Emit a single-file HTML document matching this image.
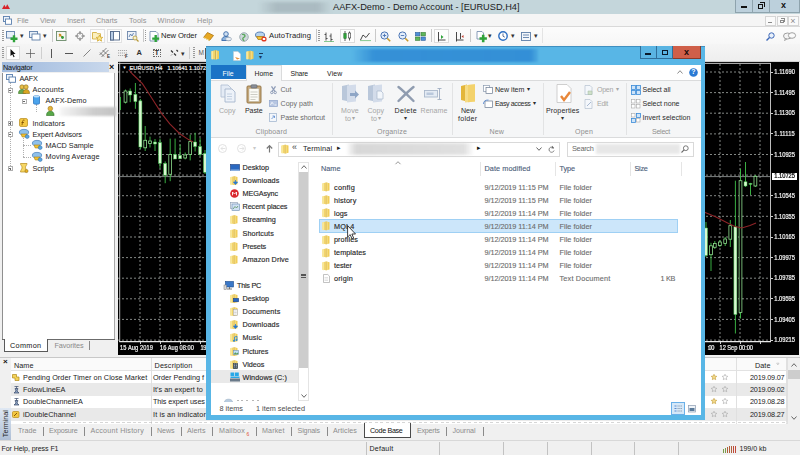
<!DOCTYPE html>
<html><head><meta charset="utf-8"><title>AAFX-Demo - Demo Account - [EURUSD,H4]</title>
<style>
html,body{margin:0;padding:0;}
body{width:800px;height:455px;overflow:hidden;position:relative;background:#f0f0f0;font-family:"Liberation Sans",sans-serif;}
#root{position:absolute;left:0;top:0;width:800px;height:455px;overflow:hidden;}
#root div,#root span.t,#root svg{position:absolute;}
#root div{box-sizing:border-box;}
span.t{white-space:pre;display:block;}
svg{overflow:visible;}
</style></head><body><div id="root">
<div style="left:0px;top:0px;width:800px;height:14px;background:#c4d6db;"></div>
<svg style="left:2.3px;top:4.3px;" width="8" height="5" viewBox="0 0 8 5"><path d="M0 5L2.300 0.800L3.800 3.200L5.200 0.300L8 5Z" fill="#d8232a"/></svg>
<span class="t" style="left:333px;top:2.53px;font-size:9.22px;line-height:9.22px;color:#1c1c1c;">AAFX-Demo - Demo Account - [EURUSD,H4]</span>
<div style="left:258px;top:2px;width:74px;height:11px;background:linear-gradient(90deg,rgba(150,165,172,0),rgba(150,165,172,.55) 25%,rgba(150,165,172,.55) 80%,rgba(150,165,172,0));filter:blur(1.5px);"></div>
<div style="left:735px;top:0px;width:18px;height:12.5px;background:#bcd0dc;border:1px solid #8ea3ad;border-top:none;"></div>
<div style="left:752px;top:0px;width:18px;height:12.5px;background:#bcd0dc;border:1px solid #8ea3ad;border-top:none;"></div>
<div style="left:769px;top:0px;width:31px;height:12.5px;background:#bcd0dc;border:1px solid #8ea3ad;border-top:none;"></div>
<div style="left:741px;top:6px;width:6px;height:2px;background:#111;"></div>
<div style="left:757.5px;top:3.5px;width:5px;height:5px;border:1.2px solid #111;"></div>
<div style="left:759.5px;top:2px;width:5px;height:5px;border:1.2px solid #111;border-left:none;border-bottom:none;"></div>
<span class="t" style="left:781px;top:0.85px;font-size:9.00px;line-height:9.00px;color:#111;letter-spacing:0.495px;font-weight:bold;">x</span>
<div style="left:0px;top:14px;width:800px;height:12.5px;background:#f5f5f5;"></div>
<div style="left:0px;top:26.3px;width:800px;height:0.8px;background:#d9d9d9;"></div>
<svg style="left:3px;top:15.5px;" width="9" height="9" viewBox="0 0 9 9"><rect x="0.5" y="0.5" width="6" height="5" fill="#eef4fb" stroke="#5a7fae" stroke-width="0.9"/><rect x="2.5" y="3" width="6" height="5.3" fill="#fff" stroke="#5a7fae" stroke-width="0.9"/></svg>
<span class="t" style="left:17px;top:17.34px;font-size:7.38px;line-height:7.38px;color:#939393;letter-spacing:-0.099px;">File</span>
<span class="t" style="left:40px;top:17.34px;font-size:7.38px;line-height:7.38px;color:#939393;letter-spacing:-0.092px;">View</span>
<span class="t" style="left:67px;top:17.34px;font-size:7.38px;line-height:7.38px;color:#939393;letter-spacing:-0.077px;">Insert</span>
<span class="t" style="left:96px;top:17.34px;font-size:7.38px;line-height:7.38px;color:#939393;letter-spacing:-0.041px;">Charts</span>
<span class="t" style="left:129px;top:17.34px;font-size:7.38px;line-height:7.38px;color:#939393;letter-spacing:0.053px;">Tools</span>
<span class="t" style="left:157.5px;top:17.34px;font-size:7.38px;line-height:7.38px;color:#939393;letter-spacing:0.207px;">Window</span>
<span class="t" style="left:197px;top:17.34px;font-size:7.38px;line-height:7.38px;color:#939393;letter-spacing:0.079px;">Help</span>
<div style="left:765px;top:15.5px;width:11px;height:10px;background:#fafafa;border:1px solid #d5d5d5;"></div>
<div style="left:776.5px;top:15.5px;width:11px;height:10px;background:#fafafa;border:1px solid #d5d5d5;"></div>
<div style="left:788px;top:15.5px;width:11px;height:10px;background:#fafafa;border:1px solid #d5d5d5;"></div>
<div style="left:768px;top:22px;width:4px;height:1px;background:#8a8a8a;"></div>
<div style="left:779.8px;top:19.5px;width:4px;height:3.5px;border:0.8px solid #8a8a8a;"></div>
<div style="left:781.2px;top:18px;width:4px;height:3.5px;border:0.8px solid #8a8a8a;border-left:none;border-bottom:none;"></div>
<span class="t" style="left:790.3px;top:16.65px;font-size:9.00px;line-height:9.00px;color:#8a8a8a;letter-spacing:0.943px;">×</span>
<div style="left:0px;top:27px;width:800px;height:17px;background:linear-gradient(#fcfcfc,#f7f7f7);"></div>
<div style="left:0px;top:43.6px;width:800px;height:0.8px;background:#dedede;"></div>
<div style="left:0px;top:44.4px;width:800px;height:16.6px;background:linear-gradient(#f5f5f5,#eeeeee);"></div>
<div style="left:0px;top:60.6px;width:800px;height:0.8px;background:#d0d0d0;"></div>
<div style="left:2px;top:29.5px;width:1.6px;height:1px;background:#9a9a9a;"></div>
<div style="left:2px;top:31.5px;width:1.6px;height:1px;background:#9a9a9a;"></div>
<div style="left:2px;top:33.5px;width:1.6px;height:1px;background:#9a9a9a;"></div>
<div style="left:2px;top:35.5px;width:1.6px;height:1px;background:#9a9a9a;"></div>
<div style="left:2px;top:37.5px;width:1.6px;height:1px;background:#9a9a9a;"></div>
<div style="left:2px;top:39.5px;width:1.6px;height:1px;background:#9a9a9a;"></div>
<svg style="left:6px;top:30.6px;" width="12" height="11" viewBox="0 0 12 11"><rect x="0.5" y="0.5" width="8" height="6.5" fill="#e9f0f8" stroke="#5d7ea8" stroke-width="0.9"/><path d="M4.500 6.600h2.300v-2.300h2.400v2.300h2.300v2.400h-2.300v2.300h-2.400v-2.300h-2.300z" fill="#2fa33a"/></svg>
<span class="t" style="left:19.5px;top:32.15px;font-size:7.00px;line-height:7.00px;color:#333;letter-spacing:-1.250px;">▾</span>
<svg style="left:29px;top:31.1px;" width="12" height="10" viewBox="0 0 12 10"><rect x="0.5" y="0.5" width="8" height="6" fill="#e9f0f8" stroke="#5d7ea8" stroke-width="0.9"/><rect x="3" y="3" width="8" height="6" fill="#fff" stroke="#5d7ea8" stroke-width="0.9"/></svg>
<span class="t" style="left:42.5px;top:32.15px;font-size:7.00px;line-height:7.00px;color:#333;letter-spacing:-1.250px;">▾</span>
<div style="left:51.5px;top:29px;width:0.8px;height:13px;background:#c9c9c9;"></div>
<svg style="left:56px;top:31.1px;" width="11" height="10" viewBox="0 0 11 10"><rect x="0.5" y="0.5" width="9.5" height="9" fill="#f6f6f0" stroke="#6a8a6a" stroke-width="0.9"/><path d="M3 3l4 4M3 5.5l2-2.5" stroke="#c88a1a" stroke-width="1.2" fill="none"/><circle cx="6.5" cy="6.5" r="1.4" fill="#2e9a3a"/></svg>
<svg style="left:75px;top:31.1px;" width="10" height="10" viewBox="0 0 10 10"><circle cx="5" cy="5" r="3.2" fill="none" stroke="#666" stroke-width="0.7"/><path d="M5 0v3.600M5 6.400V10M0 5h3.600M6.400 5H10" stroke="#555" stroke-width="0.7"/></svg>
<div style="left:89.5px;top:28.5px;width:15px;height:14.5px;background:#fdfdfd;border:1px solid #e2e2e2;"></div>
<svg style="left:91.5px;top:31.1px;" width="11" height="10" viewBox="0 0 11 10"><path d="M0.5 1.5h4l1 1.2h3v5.3h-8z" fill="#fbf0c0" stroke="#d0a830" stroke-width="0.8"/><path d="M7.5 4l1 2.2 2.3.2-1.8 1.5.6 2.3-2.1-1.3-2.1 1.3.6-2.3-1.8-1.5 2.3-.2z" fill="#fbe890" stroke="#d0a020" stroke-width="0.7"/></svg>
<div style="left:107px;top:28.5px;width:15px;height:14.5px;background:#fdfdfd;border:1px solid #e2e2e2;"></div>
<svg style="left:109.5px;top:31.1px;" width="10" height="10" viewBox="0 0 10 10"><rect x="0.5" y="0.5" width="9" height="8.5" fill="#fff" stroke="#52688a" stroke-width="0.9"/><rect x="0.5" y="0.5" width="3" height="8.5" fill="#b9cde6" stroke="#52688a" stroke-width="0.9"/></svg>
<svg style="left:126.5px;top:30.6px;" width="12" height="11" viewBox="0 0 12 11"><rect x="0.5" y="0.5" width="8.5" height="8" fill="#eef3fa" stroke="#6d86aa" stroke-width="0.9"/><path d="M2 6l1.5-3 1.5 2 1.5-3" stroke="#4a6ea0" stroke-width="0.8" fill="none"/><circle cx="8" cy="7" r="2" fill="#f4f0d0" stroke="#b89a3a" stroke-width="0.8"/><path d="M9.5 8.5l2 2" stroke="#b89a3a" stroke-width="1.2"/></svg>
<div style="left:142.5px;top:29px;width:0.8px;height:13px;background:#c9c9c9;"></div>
<div style="left:144.5px;top:29.5px;width:1.6px;height:1px;background:#9a9a9a;"></div>
<div style="left:144.5px;top:31.5px;width:1.6px;height:1px;background:#9a9a9a;"></div>
<div style="left:144.5px;top:33.5px;width:1.6px;height:1px;background:#9a9a9a;"></div>
<div style="left:144.5px;top:35.5px;width:1.6px;height:1px;background:#9a9a9a;"></div>
<div style="left:144.5px;top:37.5px;width:1.6px;height:1px;background:#9a9a9a;"></div>
<div style="left:144.5px;top:39.5px;width:1.6px;height:1px;background:#9a9a9a;"></div>
<svg style="left:148.5px;top:30.6px;" width="12" height="11" viewBox="0 0 12 11"><path d="M1 0.5h6l2 2v7.5h-8z" fill="#fff" stroke="#6d86aa" stroke-width="0.8"/><path d="M3.200 6.400h2.300v-2.300h2.400v2.300h2.300v2.400h-2.300v2.300h-2.400v-2.300h-2.300z" fill="#2fa33a"/></svg>
<span class="t" style="left:161px;top:31.61px;font-size:7.62px;line-height:7.62px;color:#222;letter-spacing:-0.093px;">New Order</span>
<svg style="left:203px;top:31.6px;" width="11" height="9" viewBox="0 0 11 9"><path d="M0.5 5.5l4-5 6 3-4 5z" fill="#e8a822" stroke="#a8720f" stroke-width="0.8"/><path d="M0.5 5.5l6 3" stroke="#fff2b0" stroke-width="0.8"/></svg>
<svg style="left:221px;top:31.1px;" width="11" height="10" viewBox="0 0 11 10"><circle cx="5" cy="3" r="2.3" fill="#cfe0f2" stroke="#3a6aa8" stroke-width="0.9"/><path d="M0.8 9.5c0-3 1.8-4 4.2-4s4.2 1 4.2 4z" fill="#8db4e0" stroke="#3a6aa8" stroke-width="0.9"/><ellipse cx="7.5" cy="8" rx="3" ry="1.8" fill="#e8eef5" stroke="#8899aa" stroke-width="0.6"/></svg>
<svg style="left:239px;top:31.6px;" width="10" height="10" viewBox="0 0 10 10"><circle cx="5" cy="5" r="4.3" fill="#cfd8dc" stroke="#90a0a8" stroke-width="0.8"/><path d="M3 2.5c1.5-.5 3 .3 3 1.6s-2 1-2.2 2.4 1.4 1.8 1 2.6" fill="none" stroke="#58a85a" stroke-width="1.3"/></svg>
<svg style="left:255px;top:31.1px;" width="12" height="11" viewBox="0 0 12 11"><ellipse cx="5" cy="4" rx="4.5" ry="3" fill="#b7d3ee" stroke="#3a6aa8" stroke-width="0.8"/><path d="M1.5 5.5l1.5 3h4l1.5-3z" fill="#f1c232" stroke="#a8720f" stroke-width="0.7"/><circle cx="9" cy="8" r="2.6" fill="#e03a22"/><rect x="7.8" y="7" width="2.4" height="2" fill="#fff"/></svg>
<span class="t" style="left:269px;top:31.61px;font-size:7.62px;line-height:7.62px;color:#222;letter-spacing:0.070px;">AutoTrading</span>
<div style="left:315.5px;top:29px;width:0.8px;height:13px;background:#c9c9c9;"></div>
<div style="left:318px;top:29.5px;width:1.6px;height:1px;background:#9a9a9a;"></div>
<div style="left:318px;top:31.5px;width:1.6px;height:1px;background:#9a9a9a;"></div>
<div style="left:318px;top:33.5px;width:1.6px;height:1px;background:#9a9a9a;"></div>
<div style="left:318px;top:35.5px;width:1.6px;height:1px;background:#9a9a9a;"></div>
<div style="left:318px;top:37.5px;width:1.6px;height:1px;background:#9a9a9a;"></div>
<div style="left:318px;top:39.5px;width:1.6px;height:1px;background:#9a9a9a;"></div>
<svg style="left:324px;top:31.6px;" width="10" height="10" viewBox="0 0 10 10"><path d="M2 0.5v8M0.5 2.5h1.5M2 6.5h1.6M7 1.5v8M5.5 4h1.5M7 7.5h1.6" stroke="#444" stroke-width="0.9" fill="none"/><path d="M0 9.5h10" stroke="#3aa84a" stroke-width="0.6"/></svg>
<div style="left:339.5px;top:28.5px;width:15px;height:14.5px;background:#fdfdfd;border:1px solid #dcdcdc;"></div>
<svg style="left:342.5px;top:31.1px;" width="9" height="11" viewBox="0 0 9 11"><path d="M2 0v10M6.5 0.5v9" stroke="#333" stroke-width="0.8"/><rect x="0.8" y="2.5" width="2.4" height="5" fill="#2fa33a" stroke="#1b6a25" stroke-width="0.5"/><rect x="5.3" y="2" width="2.4" height="5" fill="#fff" stroke="#333" stroke-width="0.6"/></svg>
<svg style="left:359.5px;top:32.1px;" width="11" height="9" viewBox="0 0 11 9"><path d="M0.5 8l2.5-5 3 2.5 3.5-4.5" stroke="#333" stroke-width="0.9" fill="none"/><path d="M0 8.6h11" stroke="#3aa84a" stroke-width="0.6"/></svg>
<div style="left:374.5px;top:29px;width:0.8px;height:13px;background:#c9c9c9;"></div>
<svg style="left:379.5px;top:31.1px;" width="11" height="11" viewBox="0 0 11 11"><circle cx="4.5" cy="4.5" r="3.6" fill="#e4eefb" stroke="#4a74b4" stroke-width="1"/><path d="M2.8 4.5h3.4M4.5 2.8v3.4" stroke="#4a74b4" stroke-width="0.9"/><path d="M7.2 7.2l3 3" stroke="#c89a2a" stroke-width="1.6"/></svg>
<svg style="left:397.5px;top:31.1px;" width="11" height="11" viewBox="0 0 11 11"><circle cx="4.5" cy="4.5" r="3.6" fill="#e4eefb" stroke="#4a74b4" stroke-width="1"/><path d="M2.8 4.5h3.4" stroke="#4a74b4" stroke-width="0.9"/><path d="M7.2 7.2l3 3" stroke="#c89a2a" stroke-width="1.6"/></svg>
<svg style="left:415px;top:31.6px;" width="11" height="9" viewBox="0 0 11 9"><rect x="0.5" y="0.5" width="4.3" height="3.3" fill="#4d8fd6" stroke="#2a5c9a" stroke-width="0.6"/><rect x="6" y="0.5" width="4.3" height="3.3" fill="#5fb65a" stroke="#2f7a2f" stroke-width="0.6"/><rect x="0.5" y="5" width="4.3" height="3.3" fill="#5fb65a" stroke="#2f7a2f" stroke-width="0.6"/><rect x="6" y="5" width="4.3" height="3.3" fill="#4d8fd6" stroke="#2a5c9a" stroke-width="0.6"/></svg>
<div style="left:430.5px;top:29px;width:0.8px;height:13px;background:#c9c9c9;"></div>
<div style="left:433.5px;top:28.5px;width:15px;height:14.5px;background:#fdfdfd;border:1px solid #dcdcdc;"></div>
<svg style="left:437px;top:31.6px;" width="9" height="10" viewBox="0 0 9 10"><path d="M1.5 0v9.5M1.5 8h7" stroke="#333" stroke-width="0.9" fill="none"/><path d="M4 3v4l2.5-2z" fill="#2fa33a"/></svg>
<svg style="left:455px;top:31.6px;" width="9" height="10" viewBox="0 0 9 10"><path d="M1.5 0v9.5M1.5 8h7M5.5 1v6" stroke="#333" stroke-width="0.9" fill="none"/><path d="M8.5 3v3l-2-1.5z" fill="#c0392b"/></svg>
<div style="left:469.5px;top:29px;width:0.8px;height:13px;background:#c9c9c9;"></div>
<svg style="left:476px;top:31.1px;" width="11" height="11" viewBox="0 0 11 11"><path d="M1 0.5h5l1.5 1.5v6h-6.5z" fill="#fff" stroke="#6d86aa" stroke-width="0.8"/><path d="M3.5 6.2h2.4v-2.4h2.6v2.4h2.4v2.6h-2.4v2.4h-2.6v-2.4h-2.4z" fill="#2fa33a"/></svg>
<span class="t" style="left:488px;top:32.15px;font-size:7.00px;line-height:7.00px;color:#333;letter-spacing:-1.250px;">▾</span>
<svg style="left:498px;top:31.1px;" width="10" height="10" viewBox="0 0 10 10"><circle cx="5" cy="5" r="4.2" fill="#fff" stroke="#2e6fc2" stroke-width="1.4"/><path d="M5 2.5v2.7l1.8 1" stroke="#2e4a7a" stroke-width="0.8" fill="none"/></svg>
<span class="t" style="left:511px;top:32.15px;font-size:7.00px;line-height:7.00px;color:#333;letter-spacing:-1.250px;">▾</span>
<svg style="left:521px;top:31.6px;" width="10" height="9" viewBox="0 0 10 9"><rect x="0.5" y="0.5" width="9" height="8" fill="#f4f7fb" stroke="#5d7ea8" stroke-width="0.9"/><path d="M2 3h6M2 5.5h6" stroke="#5d7ea8" stroke-width="0.9"/></svg>
<span class="t" style="left:534px;top:32.15px;font-size:7.00px;line-height:7.00px;color:#333;letter-spacing:-1.250px;">▾</span>
<div style="left:542px;top:28px;width:0.8px;height:15px;background:#e4e4e4;"></div>
<svg style="left:765.5px;top:31.6px;" width="9" height="9" viewBox="0 0 9 9"><circle cx="5.5" cy="3.5" r="2.7" fill="#e9f1fb" stroke="#3d68b8" stroke-width="1"/><path d="M3.5 5.5l-3 3" stroke="#3d68b8" stroke-width="1.4"/></svg>
<svg style="left:782.5px;top:32.1px;" width="13" height="9" viewBox="0 0 13 9"><ellipse cx="4.5" cy="4" rx="4" ry="3" fill="#f4f4f4" stroke="#8a8a8a" stroke-width="0.8"/><ellipse cx="9" cy="3.5" rx="3.6" ry="2.8" fill="#fafafa" stroke="#8a8a8a" stroke-width="0.8"/><path d="M2.5 6.5l-1 2 2.4-1.3" fill="#f4f4f4" stroke="#8a8a8a" stroke-width="0.7"/></svg>
<div style="left:2px;top:46.5px;width:1.6px;height:1px;background:#9a9a9a;"></div>
<div style="left:2px;top:48.5px;width:1.6px;height:1px;background:#9a9a9a;"></div>
<div style="left:2px;top:50.5px;width:1.6px;height:1px;background:#9a9a9a;"></div>
<div style="left:2px;top:52.5px;width:1.6px;height:1px;background:#9a9a9a;"></div>
<div style="left:2px;top:54.5px;width:1.6px;height:1px;background:#9a9a9a;"></div>
<div style="left:2px;top:56.5px;width:1.6px;height:1px;background:#9a9a9a;"></div>
<div style="left:5.5px;top:45.5px;width:14.5px;height:14.5px;background:#fdfdfd;border:1px solid #dcdcdc;"></div>
<svg style="left:10px;top:48.5px;" width="6" height="9" viewBox="0 0 6 9"><path d="M0.5 0v7l1.8-1.6 1.3 2.8 1-.5-1.3-2.7h2.3z" fill="#111"/></svg>
<svg style="left:26px;top:48.5px;" width="9" height="9" viewBox="0 0 9 9"><path d="M4.5 0v9M0 4.5h9" stroke="#555" stroke-width="0.7"/></svg>
<div style="left:40.5px;top:46.5px;width:0.8px;height:12px;background:#cfcfcf;"></div>
<div style="left:51px;top:48.5px;width:0.9px;height:9px;background:#555;"></div>
<div style="left:65px;top:52.6px;width:8px;height:0.9px;background:#555;"></div>
<svg style="left:83px;top:48.5px;" width="8" height="8" viewBox="0 0 8 8"><path d="M0.5 7.5l7-7" stroke="#777" stroke-width="0.9"/></svg>
<svg style="left:99px;top:47.5px;" width="11" height="11" viewBox="0 0 11 11"><path d="M0.5 7l7-7M2.5 9l7-7M1 4.5l4 4M3.5 2l4 4" stroke="#555" stroke-width="0.7"/></svg>
<span class="t" style="left:107px;top:55.02px;font-size:4.50px;line-height:4.50px;color:#333;font-weight:bold;">E</span>
<svg style="left:117.5px;top:48.5px;" width="10" height="9" viewBox="0 0 10 9"><path d="M0 1.5h9M0 4h9M0 6.5h9" stroke="#888" stroke-width="0.7" stroke-dasharray="1.2 0.8"/></svg>
<span class="t" style="left:125px;top:55.02px;font-size:4.50px;line-height:4.50px;color:#333;letter-spacing:0.251px;font-weight:bold;">F</span>
<span class="t" style="left:136.5px;top:49.27px;font-size:7.50px;line-height:7.50px;color:#333;letter-spacing:-0.416px;font-weight:bold;">A</span>
<div style="left:152.5px;top:48.5px;width:8px;height:8.5px;border:0.8px dotted #666;"></div>
<span class="t" style="left:154.4px;top:48.88px;font-size:7.50px;line-height:7.50px;color:#333;letter-spacing:-0.381px;font-weight:bold;">T</span>
<svg style="left:169.5px;top:49px;" width="9" height="8" viewBox="0 0 9 8"><path d="M1 1.5l2 2M4 4.5l2 2M6.5 1l1.5 1.5" stroke="#333" stroke-width="1.2"/><path d="M1 6.5l1.2-1.2" stroke="#888" stroke-width="1"/></svg>
<span class="t" style="left:181px;top:49.65px;font-size:7.00px;line-height:7.00px;color:#333;letter-spacing:-1.250px;">▾</span>
<div style="left:189px;top:46.5px;width:0.8px;height:12px;background:#cfcfcf;"></div>
<div style="left:193px;top:46.5px;width:1.6px;height:1px;background:#9a9a9a;"></div>
<div style="left:193px;top:48.5px;width:1.6px;height:1px;background:#9a9a9a;"></div>
<div style="left:193px;top:50.5px;width:1.6px;height:1px;background:#9a9a9a;"></div>
<div style="left:193px;top:52.5px;width:1.6px;height:1px;background:#9a9a9a;"></div>
<div style="left:193px;top:54.5px;width:1.6px;height:1px;background:#9a9a9a;"></div>
<div style="left:193px;top:56.5px;width:1.6px;height:1px;background:#9a9a9a;"></div>
<span class="t" style="left:198.6px;top:49.72px;font-size:6.50px;line-height:6.50px;color:#555;letter-spacing:0.186px;">M</span>
<div style="left:204.8px;top:47.5px;width:0.8px;height:11px;background:#555;"></div>
<div style="left:0px;top:61px;width:117.5px;height:294px;background:#f0f0f0;"></div>
<div style="left:2px;top:62px;width:106.5px;height:10px;background:linear-gradient(90deg,#9fb9dc,#b7cbe6 60%,#c9d8ec);"></div>
<span class="t" style="left:3px;top:63.59px;font-size:7.29px;line-height:7.29px;color:#111;letter-spacing:-0.189px;">Navigator</span>
<span class="t" style="left:109px;top:62.55px;font-size:9.00px;line-height:9.00px;color:#111;letter-spacing:-0.257px;font-weight:bold;">×</span>
<div style="left:2px;top:72.5px;width:113px;height:266.5px;background:#fff;border-left:1px solid #8f8f8f;border-right:1px solid #a8a8a8;"></div>
<div style="left:10px;top:82px;width:0.7px;height:86px;border-left:0.7px dotted #b0b0b0;"></div>
<div style="left:23px;top:138px;width:0.7px;height:19px;border-left:0.7px dotted #b0b0b0;"></div>
<div style="left:23px;top:145px;width:8px;height:0.7px;border-top:0.7px dotted #b0b0b0;"></div>
<div style="left:23px;top:156.5px;width:8px;height:0.7px;border-top:0.7px dotted #b0b0b0;"></div>
<div style="left:36px;top:104px;width:0.7px;height:8px;border-left:0.7px dotted #b0b0b0;"></div>
<svg style="left:5.5px;top:73.5px;" width="10" height="9" viewBox="0 0 10 9"><rect x="0.5" y="0.5" width="6" height="5" fill="#eef4fb" stroke="#5a7fae" stroke-width="0.9"/><rect x="3" y="3" width="6.5" height="5.3" fill="#fff" stroke="#5a7fae" stroke-width="0.9"/></svg>
<span class="t" style="left:19.5px;top:74.79px;font-size:7.29px;line-height:7.29px;color:#222;letter-spacing:-0.261px;">AAFX</span>
<div style="left:7.5px;top:87.5px;width:5px;height:5px;background:#fff;border:0.7px solid #b0b0b0;"></div>
<div style="left:8.7px;top:89.65px;width:2.6px;height:0.7px;background:#666;"></div>
<svg style="left:17.5px;top:84px;" width="12" height="10" viewBox="0 0 12 10"><circle cx="4" cy="3" r="2.2" fill="#e8c04a" stroke="#8a6a1a" stroke-width="0.6"/><circle cx="8" cy="3" r="2.2" fill="#e8c04a" stroke="#8a6a1a" stroke-width="0.6"/><path d="M0.5 9.5c0-3 1.5-4 3.5-4s3.500 1 3.500 4z" fill="#6aa84f" stroke="#38761d" stroke-width="0.6"/><path d="M5 9.500c0-3 1.300-4 3.300-4s3.200 1 3.200 4z" fill="#d9a520" stroke="#8a6a1a" stroke-width="0.6"/></svg>
<span class="t" style="left:32.5px;top:85.99px;font-size:7.29px;line-height:7.29px;color:#222;letter-spacing:0.189px;">Accounts</span>
<div style="left:21.5px;top:98.5px;width:5px;height:5px;background:#fff;border:0.7px solid #b0b0b0;"></div>
<div style="left:22.7px;top:100.65px;width:2.6px;height:0.7px;background:#666;"></div>
<svg style="left:32.5px;top:95px;" width="7" height="10" viewBox="0 0 7 10"><path d="M0.5 1.5c0-1 6-1 6 0v7c0 1-6 1-6 0z" fill="#4aa3ec" stroke="#1f6ab8" stroke-width="0.7"/><ellipse cx="3.5" cy="1.6" rx="3" ry="1" fill="#bfe0fb"/></svg>
<span class="t" style="left:45.5px;top:96.99px;font-size:7.29px;line-height:7.29px;color:#222;letter-spacing:0.009px;">AAFX-Demo</span>
<svg style="left:46px;top:106px;" width="9" height="10" viewBox="0 0 9 10"><circle cx="4.3" cy="2.6" r="2.3" fill="#e4b43a" stroke="#9a741a" stroke-width="0.6"/><path d="M0.5 9.5c0-3.200 1.600-4.200 3.800-4.200s3.800 1 3.800 4.200z" fill="#58a848" stroke="#2e7024" stroke-width="0.6"/></svg>
<div style="left:60px;top:106.5px;width:56px;height:9px;background:linear-gradient(90deg,rgba(238,238,238,.5),rgba(200,200,200,.9) 60%,rgba(192,192,192,.95));filter:blur(1.300px);"></div>
<div style="left:7.5px;top:121.1px;width:5px;height:5px;background:#fff;border:0.7px solid #b0b0b0;"></div>
<div style="left:8.7px;top:123.25px;width:2.6px;height:0.7px;background:#666;"></div>
<div style="left:9.65px;top:122.3px;width:0.7px;height:2.6px;background:#666;"></div>
<svg style="left:19px;top:118px;" width="9" height="9" viewBox="0 0 9 9"><rect x="0.5" y="0.5" width="8" height="8" rx="1.5" fill="#f4c842" stroke="#b88a1a" stroke-width="0.7"/><path d="M5.500 2.200c-1.300-.5-1.800.3-2 1.500l-.5 3.500M2.500 4.500h2.500" stroke="#7a4a00" stroke-width="0.8" fill="none"/></svg>
<span class="t" style="left:32.5px;top:119.79px;font-size:7.29px;line-height:7.29px;color:#222;letter-spacing:0.089px;">Indicators</span>
<div style="left:7.5px;top:132.3px;width:5px;height:5px;background:#fff;border:0.7px solid #b0b0b0;"></div>
<div style="left:8.7px;top:134.45px;width:2.6px;height:0.7px;background:#666;"></div>
<svg style="left:18.5px;top:129px;" width="11" height="10" viewBox="0 0 11 10"><ellipse cx="5" cy="3.2" rx="4.6" ry="2.8" fill="#8fc0ea" stroke="#3d78b8" stroke-width="0.7"/><path d="M2 5l1.2 3h3.6l1.2-3z" fill="#f1c232" stroke="#a8801a" stroke-width="0.6"/><circle cx="8.2" cy="7.6" r="1.9" fill="#5aa6e0" stroke="#2d66a8" stroke-width="0.5"/></svg>
<span class="t" style="left:32.5px;top:130.99px;font-size:7.29px;line-height:7.29px;color:#222;letter-spacing:-0.077px;">Expert Advisors</span>
<svg style="left:31.5px;top:140.2px;" width="11" height="10" viewBox="0 0 11 10"><ellipse cx="5" cy="3.2" rx="4.6" ry="2.8" fill="#8fc0ea" stroke="#3d78b8" stroke-width="0.7"/><path d="M2 5l1.2 3h3.6l1.2-3z" fill="#f1c232" stroke="#a8801a" stroke-width="0.6"/><circle cx="8.2" cy="7.6" r="1.9" fill="#5aa6e0" stroke="#2d66a8" stroke-width="0.5"/></svg>
<span class="t" style="left:45.5px;top:142.19px;font-size:7.29px;line-height:7.29px;color:#222;letter-spacing:-0.020px;">MACD Sample</span>
<svg style="left:31.5px;top:151.5px;" width="11" height="10" viewBox="0 0 11 10"><ellipse cx="5" cy="3.2" rx="4.6" ry="2.8" fill="#8fc0ea" stroke="#3d78b8" stroke-width="0.7"/><path d="M2 5l1.2 3h3.6l1.2-3z" fill="#f1c232" stroke="#a8801a" stroke-width="0.6"/><circle cx="8.2" cy="7.6" r="1.9" fill="#5aa6e0" stroke="#2d66a8" stroke-width="0.5"/></svg>
<span class="t" style="left:45.5px;top:153.49px;font-size:7.29px;line-height:7.29px;color:#222;letter-spacing:0.146px;">Moving Average</span>
<div style="left:7.5px;top:166.3px;width:5px;height:5px;background:#fff;border:0.7px solid #b0b0b0;"></div>
<div style="left:8.7px;top:168.45px;width:2.6px;height:0.7px;background:#666;"></div>
<div style="left:9.65px;top:167.5px;width:0.7px;height:2.6px;background:#666;"></div>
<svg style="left:19px;top:163px;" width="10" height="10" viewBox="0 0 10 10"><path d="M1.500 0.500h6.500c0 2-1.500 2-1.500 4s1.500 2.500 1.500 4.500h-6.500c0-2 1.500-2.500 1.500-4.500s-1.500-2-1.500-4z" fill="#f6d765" stroke="#b48a1a" stroke-width="0.7"/><circle cx="7.500" cy="8" r="1.600" fill="#e8b020" stroke="#8a6a1a" stroke-width="0.500"/></svg>
<span class="t" style="left:32.5px;top:164.79px;font-size:7.29px;line-height:7.29px;color:#222;letter-spacing:-0.112px;">Scripts</span>
<div style="left:2px;top:338.7px;width:113px;height:0.9px;background:#6b6b6b;"></div>
<div style="left:3.5px;top:338.5px;width:44.5px;height:13.1px;background:#fff;border:1px solid #5a5a5a;border-top:none;"></div>
<span class="t" style="left:10px;top:341.99px;font-size:7.29px;line-height:7.29px;color:#111;letter-spacing:0.321px;">Common</span>
<span class="t" style="left:54.5px;top:341.99px;font-size:7.29px;line-height:7.29px;color:#8a8a8a;letter-spacing:-0.109px;">Favorites</span>
<div style="left:89.3px;top:341px;width:0.8px;height:8.5px;background:#8a8a8a;"></div>
<div style="left:0px;top:439.5px;width:800px;height:15.5px;background:#f0f0f0;"></div>
<div style="left:0px;top:439.5px;width:800px;height:0.8px;background:#d8d8d8;"></div>
<span class="t" style="left:1.5px;top:445.01px;font-size:7.07px;line-height:7.07px;color:#222;letter-spacing:-0.085px;">For Help, press F1</span>
<div style="left:366px;top:442px;width:0.9px;height:13px;background:#c2c2c2;"></div>
<div style="left:439px;top:442px;width:0.9px;height:13px;background:#c2c2c2;"></div>
<div style="left:502.5px;top:442px;width:0.9px;height:13px;background:#c2c2c2;"></div>
<div style="left:546.5px;top:442px;width:0.9px;height:13px;background:#c2c2c2;"></div>
<div style="left:591px;top:442px;width:0.9px;height:13px;background:#c2c2c2;"></div>
<div style="left:634px;top:442px;width:0.9px;height:13px;background:#c2c2c2;"></div>
<div style="left:677.5px;top:442px;width:0.9px;height:13px;background:#c2c2c2;"></div>
<span class="t" style="left:369.5px;top:445.01px;font-size:7.07px;line-height:7.07px;color:#222;letter-spacing:0.229px;">Default</span>
<div style="left:723px;top:448.5px;width:1.4px;height:4px;background:#7a9a4a;"></div>
<div style="left:725px;top:447.5px;width:1.4px;height:5px;background:#7a9a4a;"></div>
<div style="left:727px;top:446.5px;width:1.4px;height:6px;background:#b0603a;"></div>
<div style="left:729px;top:445.5px;width:1.4px;height:7px;background:#b0603a;"></div>
<div style="left:731px;top:445.5px;width:1.4px;height:7px;background:#b0603a;"></div>
<div style="left:733px;top:445.5px;width:1.4px;height:7px;background:#c04a3a;"></div>
<div style="left:735px;top:445.5px;width:1.4px;height:7px;background:#c04a3a;"></div>
<span class="t" style="left:739.5px;top:445.01px;font-size:7.07px;line-height:7.07px;color:#222;letter-spacing:-0.014px;">199/0 kb</span>
<div style="left:118px;top:61.8px;width:680.5px;height:293.2px;background:#000;"></div>
<svg style="left:0px;top:0px;" width="800" height="455" viewBox="0 0 800 455"><path d="M118 72.0H770M118 92.6H770M118 113.2H770M118 133.9H770M118 154.5H770M118 175.1H770M118 195.7H770M118 216.3H770M118 237.0H770M118 257.6H770M118 278.2H770M118 298.8H770M118 319.4H770M118 340.1H770M140 64V341.500M160 64V341.500M180 64V341.500M200 64V341.500M220 64V341.500M240 64V341.500M260 64V341.500M280 64V341.500M300 64V341.500M320 64V341.500M340 64V341.500M360 64V341.500M380 64V341.500M400 64V341.500M420 64V341.500M440 64V341.500M460 64V341.500M480 64V341.500M500 64V341.500M520 64V341.500M540 64V341.500M560 64V341.500M580 64V341.500M600 64V341.500M620 64V341.500M640 64V341.500M660 64V341.500M680 64V341.500M700 64V341.500M720 64V341.500M740 64V341.500M760 64V341.500" stroke="#a4aaa6" stroke-width="0.8" stroke-dasharray="2 2" fill="none"/><path d="M119.700 62.500V342M118 63.400H770.500M770.500 63V342" stroke="#d4d4d4" stroke-width="0.9" fill="none"/><path d="M119.300 341.700H771" stroke="#e8e8e8" stroke-width="1.200" fill="none"/><path d="M118 176.600H770" stroke="#8a9090" stroke-width="0.9"/><path d="M120.5 97V110" stroke="#3fc24a" stroke-width="0.9"/><path d="M125.5 89.5V103.5" stroke="#3fc24a" stroke-width="0.9"/><rect x="124.1" y="91" width="2.8" height="11.2" fill="#000" stroke="#8fe08f" stroke-width="0.8"/><path d="M130.2 88.4V102.2" stroke="#3fc24a" stroke-width="0.9"/><rect x="128.7" y="91" width="3" height="4" fill="#d8f7d0" stroke="#3fc24a" stroke-width="0.5"/><path d="M135.4 83V108.8" stroke="#3fc24a" stroke-width="0.9"/><rect x="133.9" y="94.3" width="3" height="7.3" fill="#d8f7d0" stroke="#3fc24a" stroke-width="0.5"/><path d="M140.4 99V149" stroke="#3fc24a" stroke-width="0.9"/><rect x="138.9" y="100.9" width="3" height="46.1" fill="#d8f7d0" stroke="#3fc24a" stroke-width="0.5"/><path d="M145.2 126V151" stroke="#3fc24a" stroke-width="0.9"/><rect x="143.8" y="140.3" width="2.8" height="7.5" fill="#000" stroke="#8fe08f" stroke-width="0.8"/><path d="M150 136.6V147.5" stroke="#3fc24a" stroke-width="0.9"/><rect x="148.6" y="141" width="2.8" height="2.5" fill="#000" stroke="#8fe08f" stroke-width="0.8"/><path d="M155 139V151" stroke="#3fc24a" stroke-width="0.9"/><rect x="153.5" y="142" width="3" height="2" fill="#d8f7d0" stroke="#3fc24a" stroke-width="0.5"/><path d="M160 138.6V168.3" stroke="#3fc24a" stroke-width="0.9"/><rect x="158.5" y="142.6" width="3" height="20.8" fill="#d8f7d0" stroke="#3fc24a" stroke-width="0.5"/><path d="M165.2 161.4V183.2" stroke="#3fc24a" stroke-width="0.9"/><rect x="163.7" y="163.4" width="3" height="11.8" fill="#d8f7d0" stroke="#3fc24a" stroke-width="0.5"/><path d="M170.2 138.6V181.2" stroke="#3fc24a" stroke-width="0.9"/><rect x="168.8" y="154.5" width="2.8" height="19.8" fill="#000" stroke="#8fe08f" stroke-width="0.8"/><path d="M175.1 138.6V159" stroke="#3fc24a" stroke-width="0.9"/><rect x="173.6" y="154.5" width="3" height="4.5" fill="#d8f7d0" stroke="#3fc24a" stroke-width="0.5"/><path d="M180.1 144.6V158.8" stroke="#3fc24a" stroke-width="0.9"/><rect x="178.6" y="155.4" width="3" height="3.4" fill="#d8f7d0" stroke="#3fc24a" stroke-width="0.5"/><path d="M185.2 152.5V159.4" stroke="#3fc24a" stroke-width="0.9"/><rect x="183.8" y="155" width="2.8" height="3" fill="#000" stroke="#8fe08f" stroke-width="0.8"/><path d="M190.2 134.7V160.4" stroke="#3fc24a" stroke-width="0.9"/><rect x="188.8" y="141.6" width="2.8" height="12.9" fill="#000" stroke="#8fe08f" stroke-width="0.8"/><path d="M195.1 132.7V151.5" stroke="#3fc24a" stroke-width="0.9"/><rect x="193.6" y="142" width="3" height="4.5" fill="#d8f7d0" stroke="#3fc24a" stroke-width="0.5"/><path d="M200.1 138V156" stroke="#3fc24a" stroke-width="0.9"/><rect x="198.6" y="146.5" width="3" height="8" fill="#d8f7d0" stroke="#3fc24a" stroke-width="0.5"/><path d="M205 150V174" stroke="#3fc24a" stroke-width="0.9"/><rect x="203.5" y="153.5" width="3" height="18.8" fill="#d8f7d0" stroke="#3fc24a" stroke-width="0.5"/><path d="M706 222V257" stroke="#3fc24a" stroke-width="0.9"/><rect x="704.5" y="228" width="3" height="27.5" fill="#d8f7d0" stroke="#3fc24a" stroke-width="0.5"/><path d="M711 242.8V271" stroke="#3fc24a" stroke-width="0.9"/><rect x="709.6" y="245.8" width="2.8" height="8.9" fill="#000" stroke="#8fe08f" stroke-width="0.8"/><path d="M714.8 241V249" stroke="#3fc24a" stroke-width="0.9"/><rect x="713.4" y="243.4" width="2.8" height="3.9" fill="#000" stroke="#8fe08f" stroke-width="0.8"/><path d="M719.9 240V247" stroke="#3fc24a" stroke-width="0.9"/><rect x="718.5" y="242" width="2.8" height="3.5" fill="#000" stroke="#8fe08f" stroke-width="0.8"/><path d="M725.2 237V246" stroke="#3fc24a" stroke-width="0.9"/><rect x="723.8" y="239" width="2.8" height="4.4" fill="#000" stroke="#8fe08f" stroke-width="0.8"/><path d="M730.3 220V247" stroke="#3fc24a" stroke-width="0.9"/><rect x="728.9" y="225.7" width="2.8" height="13.5" fill="#000" stroke="#8fe08f" stroke-width="0.8"/><path d="M735.4 180.7V333.5" stroke="#3fc24a" stroke-width="0.9"/><rect x="733.9" y="226.8" width="3" height="87.7" fill="#d8f7d0" stroke="#3fc24a" stroke-width="0.5"/><path d="M740.5 168.6V318.5" stroke="#3fc24a" stroke-width="0.9"/><rect x="739.1" y="180.7" width="2.8" height="131.8" fill="#000" stroke="#8fe08f" stroke-width="0.8"/><path d="M745.5 162V187" stroke="#3fc24a" stroke-width="0.9"/><rect x="744" y="181.8" width="3" height="4.2" fill="#d8f7d0" stroke="#3fc24a" stroke-width="0.5"/><path d="M750.5 182.9V195" stroke="#3fc24a" stroke-width="0.9"/><rect x="749" y="183.5" width="3" height="0.8" fill="#d8f7d0" stroke="#3fc24a" stroke-width="0.5"/><path d="M755.4 175V187" stroke="#3fc24a" stroke-width="0.9"/><rect x="754" y="176.3" width="2.8" height="9.7" fill="#000" stroke="#8fe08f" stroke-width="0.8"/><path d="M128.500 69.500L133 74.500L142.400 83.700L147.700 91.700L153 100L161.900 113.900L169.800 123.800L179.700 133.700L188.600 139.600L193 142" stroke="#8e2428" stroke-width="1.1" fill="none"/><path d="M704 212L716 217L728.600 223.500L735 226.500L741.800 228L750 225.500L756 223" stroke="#8e2428" stroke-width="1.1" fill="none"/></svg>
<span class="t" style="left:122.3px;top:66.33px;font-size:4.50px;line-height:4.50px;color:#fff;letter-spacing:-0.454px;">▼</span>
<span class="t" style="left:129.5px;top:66.16px;font-size:5.71px;line-height:5.71px;color:#f6f6f6;-webkit-text-stroke:0.2px #f6f6f6;">EURUSD,H4</span>
<span class="t" style="left:167.5px;top:66.24px;font-size:5.56px;line-height:5.56px;color:#f6f6f6;-webkit-text-stroke:0.2px #f6f6f6;">1.10641 1.10725 1.10641 1.10725</span>
<div style="left:770.5px;top:71.6px;width:2.5px;height:0.8px;background:#d0d0d0;"></div>
<span class="t" style="left:774.3px;top:70.22px;font-size:5.78px;line-height:5.78px;color:#f0f0f0;letter-spacing:0.034px;transform:scaleY(1.14);transform-origin:50% 55%;-webkit-text-stroke:0.2px #f0f0f0;">1.11690</span>
<div style="left:770.5px;top:92.22px;width:2.5px;height:0.8px;background:#d0d0d0;"></div>
<span class="t" style="left:774.3px;top:90.84px;font-size:5.78px;line-height:5.78px;color:#f0f0f0;letter-spacing:0.034px;transform:scaleY(1.14);transform-origin:50% 55%;-webkit-text-stroke:0.2px #f0f0f0;">1.11495</span>
<div style="left:770.5px;top:112.84px;width:2.5px;height:0.8px;background:#d0d0d0;"></div>
<span class="t" style="left:774.3px;top:111.46px;font-size:5.78px;line-height:5.78px;color:#f0f0f0;letter-spacing:0.034px;transform:scaleY(1.14);transform-origin:50% 55%;-webkit-text-stroke:0.2px #f0f0f0;">1.11305</span>
<div style="left:770.5px;top:133.46px;width:2.5px;height:0.8px;background:#d0d0d0;"></div>
<span class="t" style="left:774.3px;top:132.08px;font-size:5.78px;line-height:5.78px;color:#f0f0f0;letter-spacing:0.157px;transform:scaleY(1.14);transform-origin:50% 55%;-webkit-text-stroke:0.2px #f0f0f0;">1.11115</span>
<div style="left:770.5px;top:154.08px;width:2.5px;height:0.8px;background:#d0d0d0;"></div>
<span class="t" style="left:774.3px;top:152.70px;font-size:5.78px;line-height:5.78px;color:#f0f0f0;letter-spacing:-0.027px;transform:scaleY(1.14);transform-origin:50% 55%;-webkit-text-stroke:0.2px #f0f0f0;">1.10925</span>
<div style="left:770.5px;top:195.32px;width:2.5px;height:0.8px;background:#d0d0d0;"></div>
<span class="t" style="left:774.3px;top:193.94px;font-size:5.78px;line-height:5.78px;color:#f0f0f0;letter-spacing:-0.027px;transform:scaleY(1.14);transform-origin:50% 55%;-webkit-text-stroke:0.2px #f0f0f0;">1.10545</span>
<div style="left:770.5px;top:215.94px;width:2.5px;height:0.8px;background:#d0d0d0;"></div>
<span class="t" style="left:774.3px;top:214.56px;font-size:5.78px;line-height:5.78px;color:#f0f0f0;letter-spacing:-0.027px;transform:scaleY(1.14);transform-origin:50% 55%;-webkit-text-stroke:0.2px #f0f0f0;">1.10355</span>
<div style="left:770.5px;top:236.56px;width:2.5px;height:0.8px;background:#d0d0d0;"></div>
<span class="t" style="left:774.3px;top:235.18px;font-size:5.78px;line-height:5.78px;color:#f0f0f0;letter-spacing:-0.027px;transform:scaleY(1.14);transform-origin:50% 55%;-webkit-text-stroke:0.2px #f0f0f0;">1.10165</span>
<div style="left:770.5px;top:257.18px;width:2.5px;height:0.8px;background:#d0d0d0;"></div>
<span class="t" style="left:774.3px;top:255.80px;font-size:5.78px;line-height:5.78px;color:#f0f0f0;letter-spacing:-0.027px;transform:scaleY(1.14);transform-origin:50% 55%;-webkit-text-stroke:0.2px #f0f0f0;">1.09975</span>
<div style="left:770.5px;top:277.8px;width:2.5px;height:0.8px;background:#d0d0d0;"></div>
<span class="t" style="left:774.3px;top:276.42px;font-size:5.78px;line-height:5.78px;color:#f0f0f0;letter-spacing:-0.027px;transform:scaleY(1.14);transform-origin:50% 55%;-webkit-text-stroke:0.2px #f0f0f0;">1.09785</span>
<div style="left:770.5px;top:298.42px;width:2.5px;height:0.8px;background:#d0d0d0;"></div>
<span class="t" style="left:774.3px;top:297.04px;font-size:5.78px;line-height:5.78px;color:#f0f0f0;letter-spacing:-0.027px;transform:scaleY(1.14);transform-origin:50% 55%;-webkit-text-stroke:0.2px #f0f0f0;">1.09595</span>
<div style="left:770.5px;top:319.04px;width:2.5px;height:0.8px;background:#d0d0d0;"></div>
<span class="t" style="left:774.3px;top:317.66px;font-size:5.78px;line-height:5.78px;color:#f0f0f0;letter-spacing:-0.027px;transform:scaleY(1.14);transform-origin:50% 55%;-webkit-text-stroke:0.2px #f0f0f0;">1.09405</span>
<div style="left:770.5px;top:339.66px;width:2.5px;height:0.8px;background:#d0d0d0;"></div>
<span class="t" style="left:774.3px;top:338.28px;font-size:5.78px;line-height:5.78px;color:#f0f0f0;letter-spacing:-0.027px;transform:scaleY(1.14);transform-origin:50% 55%;-webkit-text-stroke:0.2px #f0f0f0;">1.09215</span>
<div style="left:772px;top:173.3px;width:25px;height:7px;background:#fff;"></div>
<span class="t" style="left:774.3px;top:174.32px;font-size:5.78px;line-height:5.78px;color:#000;letter-spacing:-0.027px;transform:scaleY(1.14);transform-origin:50% 55%;-webkit-text-stroke:0.2px #000;">1.10725</span>
<div style="left:139.6px;top:341.5px;width:0.8px;height:2px;background:#d0d0d0;"></div>
<div style="left:159.6px;top:341.5px;width:0.8px;height:2px;background:#d0d0d0;"></div>
<div style="left:179.6px;top:341.5px;width:0.8px;height:2px;background:#d0d0d0;"></div>
<div style="left:199.6px;top:341.5px;width:0.8px;height:2px;background:#d0d0d0;"></div>
<div style="left:719.6px;top:341.5px;width:0.8px;height:2px;background:#d0d0d0;"></div>
<div style="left:739.6px;top:341.5px;width:0.8px;height:2px;background:#d0d0d0;"></div>
<div style="left:759.6px;top:341.5px;width:0.8px;height:2px;background:#d0d0d0;"></div>
<span class="t" style="left:120px;top:346.29px;font-size:5.66px;line-height:5.66px;color:#f0f0f0;letter-spacing:0.110px;transform:scaleY(1.14);transform-origin:50% 55%;-webkit-text-stroke:0.2px #f0f0f0;">15 Aug 2019</span>
<span class="t" style="left:160px;top:346.29px;font-size:5.66px;line-height:5.66px;color:#f0f0f0;letter-spacing:0.053px;transform:scaleY(1.14);transform-origin:50% 55%;-webkit-text-stroke:0.2px #f0f0f0;">16 Aug 08:00</span>
<span class="t" style="left:200.5px;top:346.29px;font-size:5.66px;line-height:5.66px;color:#f0f0f0;letter-spacing:-0.398px;transform:scaleY(1.14);transform-origin:50% 55%;-webkit-text-stroke:0.2px #f0f0f0;">19</span>
<span class="t" style="left:707.5px;top:346.29px;font-size:5.66px;line-height:5.66px;color:#f0f0f0;letter-spacing:-0.456px;transform:scaleY(1.14);transform-origin:50% 55%;-webkit-text-stroke:0.2px #f0f0f0;">:00</span>
<span class="t" style="left:719.5px;top:346.29px;font-size:5.66px;line-height:5.66px;color:#f0f0f0;letter-spacing:-0.015px;transform:scaleY(1.14);transform-origin:50% 55%;-webkit-text-stroke:0.2px #f0f0f0;">12 Sep 00:00</span>
<div style="left:0px;top:355px;width:800px;height:85px;background:#f0f0f0;"></div>
<div style="left:0px;top:357px;width:800px;height:0.8px;background:#c8c8c8;"></div>
<div style="left:0px;top:358px;width:11px;height:82px;background:#f0f0f0;"></div>
<span class="t" style="left:3px;top:357.60px;font-size:8.00px;line-height:8.00px;color:#111;letter-spacing:0.327px;font-weight:bold;">×</span>
<div style="left:0px;top:408px;width:10.5px;height:32px;background:linear-gradient(180deg,#dfe8f3,#aebfd6);"></div>
<span class="t" style="left:-9.5px;top:420.24px;font-size:7.2px;line-height:7.2px;color:#222;transform:rotate(-90deg);transform-origin:center;width:30px;text-align:center;">Terminal</span>
<div style="left:11px;top:358px;width:776px;height:66px;background:#fff;"></div>
<div style="left:11px;top:358px;width:776px;height:12.5px;background:#fafafa;border-bottom:1px solid #e2e2e2;"></div>
<div style="left:11px;top:383px;width:776px;height:12.5px;background:#e9e9e9;"></div>
<div style="left:11px;top:408px;width:776px;height:12.5px;background:#e9e9e9;"></div>
<div style="left:151px;top:358px;width:0.8px;height:66px;background:#e0e0e0;"></div>
<div style="left:736px;top:358px;width:0.8px;height:66px;background:#e0e0e0;"></div>
<div style="left:785.5px;top:358px;width:0.8px;height:66px;background:#e0e0e0;"></div>
<span class="t" style="left:14px;top:361.61px;font-size:7.26px;line-height:7.26px;color:#222;letter-spacing:0.032px;">Name</span>
<span class="t" style="left:154.5px;top:361.61px;font-size:7.26px;line-height:7.26px;color:#222;letter-spacing:0.152px;">Description</span>
<span class="t" style="left:755px;top:361.61px;font-size:7.26px;line-height:7.26px;color:#222;letter-spacing:0.040px;">Date</span>
<svg style="left:776px;top:363px;" width="5" height="4" viewBox="0 0 7 7"><path d="M0.300 0.300h4.200l-2.100 3.200z" fill="none" stroke="#8a8a8a" stroke-width="0.600"/></svg>
<span class="t" style="left:23px;top:373.61px;font-size:7.26px;line-height:7.26px;color:#222;letter-spacing:0.063px;">Pending Order Timer on Close Market</span>
<span class="t" style="left:153px;top:373.61px;font-size:7.26px;line-height:7.26px;color:#222;letter-spacing:-0.018px;">Order Pending f</span>
<span class="t" style="left:750px;top:373.61px;font-size:7.26px;line-height:7.26px;color:#222;letter-spacing:-0.185px;">2019.09.07</span>
<span class="t" style="left:23px;top:385.81px;font-size:7.26px;line-height:7.26px;color:#222;letter-spacing:-0.027px;">FolowLineEA</span>
<span class="t" style="left:153px;top:385.81px;font-size:7.26px;line-height:7.26px;color:#222;letter-spacing:0.034px;">It&#x27;s an expert to</span>
<span class="t" style="left:750px;top:385.81px;font-size:7.26px;line-height:7.26px;color:#222;letter-spacing:-0.185px;">2019.09.02</span>
<span class="t" style="left:23px;top:398.21px;font-size:7.26px;line-height:7.26px;color:#222;letter-spacing:0.016px;">DoubleChannelEA</span>
<span class="t" style="left:153px;top:398.21px;font-size:7.26px;line-height:7.26px;color:#222;letter-spacing:-0.080px;">This expert uses</span>
<span class="t" style="left:750px;top:398.21px;font-size:7.26px;line-height:7.26px;color:#222;letter-spacing:-0.185px;">2019.08.28</span>
<span class="t" style="left:23px;top:410.81px;font-size:7.26px;line-height:7.26px;color:#222;letter-spacing:0.094px;">iDoubleChannel</span>
<span class="t" style="left:153px;top:410.81px;font-size:7.26px;line-height:7.26px;color:#222;letter-spacing:0.119px;">It is an indicator</span>
<span class="t" style="left:750px;top:410.81px;font-size:7.26px;line-height:7.26px;color:#222;letter-spacing:-0.185px;">2019.08.27</span>
<svg style="left:12px;top:373.5px;" width="8" height="7" viewBox="0 0 8 7"><path d="M0.500 0.500h4v2.500h2.500v3.500h-4v-2.500h-2.500z" fill="#f4d35a" stroke="#b08a1a" stroke-width="0.700"/></svg>
<svg style="left:12.5px;top:385.5px;" width="7" height="7.5" viewBox="0 0 7 7.5"><path d="M1.500 0.500h4M3.500 0.500v2M2 2.500h3l-1 2.500 2 2h-5l2-2z" fill="#8aa0c0" stroke="#3a4a6a" stroke-width="0.700"/></svg>
<svg style="left:12.5px;top:398px;" width="7" height="7.5" viewBox="0 0 7 7.5"><path d="M1.500 0.500h4M3.500 0.500v2M2 2.500h3l-1 2.500 2 2h-5l2-2z" fill="#8aa0c0" stroke="#3a4a6a" stroke-width="0.700"/></svg>
<svg style="left:12px;top:410.5px;" width="8" height="7" viewBox="0 0 8 7"><rect x="0.500" y="0.500" width="6.500" height="6" rx="1" fill="#f4c842" stroke="#b88a1a" stroke-width="0.700"/><path d="M2 5l3-3" stroke="#7a4a00" stroke-width="0.9"/></svg>
<div style="left:23px;top:421.8px;width:764px;height:1.5px;background:repeating-linear-gradient(90deg,#8a8a8a 0 3px,#fff 3px 5.500px);opacity:.35;"></div>
<svg style="left:710.5px;top:373.7px;" width="6" height="6" viewBox="0 0 7 7"><path d="M3.500 0.300l1 2.100 2.300.3-1.700 1.600.4 2.300-2-1.100-2 1.100.4-2.300L0.200 2.700l2.300-.3z" fill="#f3d98a" stroke="#b8922a" stroke-width="0.600"/></svg>
<svg style="left:721.5px;top:373.7px;" width="6" height="6" viewBox="0 0 7 7"><path d="M3.500 0.300l1 2.100 2.300.3-1.700 1.600.4 2.300-2-1.100-2 1.100.4-2.300L0.200 2.700l2.300-.3z" fill="none" stroke="#9a9a9a" stroke-width="0.600"/></svg>
<svg style="left:710.5px;top:385.9px;" width="6" height="6" viewBox="0 0 7 7"><path d="M3.500 0.300l1 2.100 2.300.3-1.700 1.600.4 2.300-2-1.100-2 1.100.4-2.300L0.200 2.700l2.300-.3z" fill="none" stroke="#9a9a9a" stroke-width="0.600"/></svg>
<svg style="left:721.5px;top:385.9px;" width="6" height="6" viewBox="0 0 7 7"><path d="M3.500 0.300l1 2.100 2.300.3-1.700 1.600.4 2.300-2-1.100-2 1.100.4-2.300L0.200 2.700l2.300-.3z" fill="none" stroke="#9a9a9a" stroke-width="0.600"/></svg>
<svg style="left:710.5px;top:398.3px;" width="6" height="6" viewBox="0 0 7 7"><path d="M3.500 0.300l1 2.100 2.300.3-1.700 1.600.4 2.300-2-1.100-2 1.100.4-2.300L0.200 2.700l2.300-.3z" fill="#f3d98a" stroke="#b8922a" stroke-width="0.600"/></svg>
<svg style="left:721.5px;top:398.3px;" width="6" height="6" viewBox="0 0 7 7"><path d="M3.500 0.300l1 2.100 2.300.3-1.700 1.600.4 2.300-2-1.100-2 1.100.4-2.300L0.200 2.700l2.300-.3z" fill="none" stroke="#9a9a9a" stroke-width="0.600"/></svg>
<svg style="left:710.5px;top:410.9px;" width="6" height="6" viewBox="0 0 7 7"><path d="M3.500 0.300l1 2.100 2.300.3-1.700 1.600.4 2.300-2-1.100-2 1.100.4-2.300L0.200 2.700l2.300-.3z" fill="none" stroke="#9a9a9a" stroke-width="0.600"/></svg>
<svg style="left:721.5px;top:410.9px;" width="6" height="6" viewBox="0 0 7 7"><path d="M3.500 0.300l1 2.100 2.300.3-1.700 1.600.4 2.300-2-1.100-2 1.100.4-2.300L0.200 2.700l2.300-.3z" fill="none" stroke="#9a9a9a" stroke-width="0.600"/></svg>
<div style="left:787px;top:358px;width:13px;height:66px;background:#f0f0f0;border-left:1px solid #e0e0e0;"></div>
<svg style="left:790.5px;top:363px;" width="6" height="4" viewBox="0 0 6 4"><path d="M0.500 3.500l2.500-2.800 2.500 2.800" fill="none" stroke="#555" stroke-width="0.9"/></svg>
<div style="left:788px;top:370px;width:11.5px;height:9px;background:#cdcdcd;"></div>
<svg style="left:790.5px;top:415.5px;" width="6" height="4" viewBox="0 0 6 4"><path d="M0.500 0.500l2.500 2.800 2.500-2.800" fill="none" stroke="#555" stroke-width="0.9"/></svg>
<div style="left:11px;top:423.5px;width:789px;height:1px;background:#3a3a3a;"></div>
<div style="left:11px;top:424.2px;width:789px;height:15.3px;background:#f0f0f0;"></div>
<span class="t" style="left:18px;top:427.88px;font-size:7.13px;line-height:7.13px;color:#8c8c8c;letter-spacing:0.030px;">Trade</span>
<span class="t" style="left:49px;top:427.88px;font-size:7.13px;line-height:7.13px;color:#8c8c8c;letter-spacing:-0.200px;">Exposure</span>
<span class="t" style="left:90.5px;top:427.88px;font-size:7.13px;line-height:7.13px;color:#8c8c8c;letter-spacing:0.240px;">Account History</span>
<span class="t" style="left:157px;top:427.88px;font-size:7.13px;line-height:7.13px;color:#8c8c8c;letter-spacing:-0.079px;">News</span>
<span class="t" style="left:187px;top:427.88px;font-size:7.13px;line-height:7.13px;color:#8c8c8c;letter-spacing:0.048px;">Alerts</span>
<span class="t" style="left:219px;top:427.88px;font-size:7.13px;line-height:7.13px;color:#8c8c8c;letter-spacing:0.207px;">Mailbox</span>
<span class="t" style="left:262px;top:427.88px;font-size:7.13px;line-height:7.13px;color:#8c8c8c;letter-spacing:0.121px;">Market</span>
<span class="t" style="left:297.5px;top:427.88px;font-size:7.13px;line-height:7.13px;color:#8c8c8c;letter-spacing:-0.124px;">Signals</span>
<span class="t" style="left:333px;top:427.88px;font-size:7.13px;line-height:7.13px;color:#8c8c8c;letter-spacing:0.080px;">Articles</span>
<span class="t" style="left:417px;top:427.88px;font-size:7.13px;line-height:7.13px;color:#8c8c8c;letter-spacing:-0.237px;">Experts</span>
<span class="t" style="left:452.5px;top:427.88px;font-size:7.13px;line-height:7.13px;color:#8c8c8c;letter-spacing:-0.053px;">Journal</span>
<div style="left:42.5px;top:426.5px;width:0.8px;height:9px;background:#8a8a8a;"></div>
<div style="left:84px;top:426.5px;width:0.8px;height:9px;background:#8a8a8a;"></div>
<div style="left:150.5px;top:426.5px;width:0.8px;height:9px;background:#8a8a8a;"></div>
<div style="left:180.5px;top:426.5px;width:0.8px;height:9px;background:#8a8a8a;"></div>
<div style="left:212px;top:426.5px;width:0.8px;height:9px;background:#8a8a8a;"></div>
<div style="left:255.5px;top:426.5px;width:0.8px;height:9px;background:#8a8a8a;"></div>
<div style="left:291px;top:426.5px;width:0.8px;height:9px;background:#8a8a8a;"></div>
<div style="left:327px;top:426.5px;width:0.8px;height:9px;background:#8a8a8a;"></div>
<div style="left:446px;top:426.5px;width:0.8px;height:9px;background:#8a8a8a;"></div>
<div style="left:482.5px;top:426.5px;width:0.8px;height:9px;background:#8a8a8a;"></div>
<span class="t" style="left:246.5px;top:431.75px;font-size:5.00px;line-height:5.00px;color:#e0503a;letter-spacing:-0.280px;">6</span>
<div style="left:364px;top:423.3px;width:46.5px;height:14.7px;background:#fff;border:1px solid #4a4a4a;border-top:none;"></div>
<span class="t" style="left:370px;top:427.88px;font-size:7.13px;line-height:7.13px;color:#111;letter-spacing:-0.306px;">Code Base</span>
<div style="left:205.5px;top:45.5px;width:499.5px;height:374.7px;background:#58b6e6;border-top:1px solid #3f8fc0;"></div>
<div style="left:352px;top:48.5px;width:186px;height:13px;background:linear-gradient(90deg,rgba(30,120,205,0),rgba(30,120,205,.6) 12%,rgba(30,120,205,.62) 96%,rgba(30,120,205,.2));filter:blur(1.300px);"></div>
<svg style="left:211px;top:50px;" width="8.6" height="9.5" viewBox="0 0 8 9"><path d="M0.300 1.300l3.500-1v8.600l-3.500-.700z" fill="#f3d56a"/><path d="M0.300 1.300l1.600-.450v8.250l-1.600-.300z" fill="#f9e9a0"/><path d="M4.200 0.300l3.300.700v7.300l-3.300.600z" fill="#f1cd58"/><path d="M4.200 0.300l1.500.300v8.050l-1.500.250z" fill="#f7e08a"/><path d="M3.800 0.300h.5v8.600h-.5z" fill="#c79a22"/></svg>
<svg style="left:232.5px;top:50.5px;" width="8" height="10" viewBox="0 0 8 10"><path d="M0.500 0.500h4.500l2.500 2.500v6.500h-7z" fill="#fff" stroke="#c8c8c8" stroke-width="0.500"/><path d="M2 6l2 2.500 3-1z" fill="#e8903a"/></svg>
<svg style="left:245.5px;top:50px;" width="8" height="10" viewBox="0 0 8 9"><path d="M0.300 1.300l3.500-1v8.600l-3.500-.700z" fill="#f3d56a"/><path d="M0.300 1.300l1.600-.450v8.250l-1.600-.300z" fill="#f9e9a0"/><path d="M4.200 0.300l3.300.700v7.300l-3.300.600z" fill="#f1cd58"/><path d="M4.200 0.300l1.500.300v8.050l-1.500.250z" fill="#f7e08a"/><path d="M3.800 0.300h.5v8.600h-.5z" fill="#c79a22"/></svg>
<div style="left:259px;top:53px;width:4px;height:0.9px;background:#1a3a5a;"></div>
<span class="t" style="left:258.8px;top:53.70px;font-size:6.00px;line-height:6.00px;color:#1a3a5a;letter-spacing:-0.100px;">▾</span>
<div style="left:639.5px;top:46px;width:17px;height:13.3px;background:#5ab4e2;border:1px solid #2f6f9a;border-top:none;"></div>
<div style="left:655.5px;top:46px;width:17.5px;height:13.3px;background:#5ab4e2;border:1px solid #2f6f9a;border-top:none;"></div>
<div style="left:672.5px;top:46px;width:28.5px;height:13.3px;background:#cf5f49;border:1px solid #8a3a2a;border-top:none;border-left:none;"></div>
<div style="left:645px;top:52.8px;width:6px;height:2px;background:#0a1a2a;"></div>
<div style="left:661.5px;top:50px;width:6px;height:5px;border:1.300px solid #0a1a2a;"></div>
<span class="t" style="left:684px;top:48.05px;font-size:9.00px;line-height:9.00px;color:#1a0a0a;letter-spacing:0.495px;font-weight:bold;">x</span>
<div style="left:211px;top:64.5px;width:489.5px;height:15.5px;background:#fff;"></div>
<div style="left:211px;top:65px;width:35px;height:13.8px;background:#1a73c6;"></div>
<span class="t" style="left:222.5px;top:70.62px;font-size:6.86px;line-height:6.86px;color:#fff;letter-spacing:-0.015px;">File</span>
<div style="left:246px;top:65px;width:35.5px;height:15.5px;background:#f5f6f7;border:1px solid #dadbdc;border-bottom:none;"></div>
<span class="t" style="left:254.5px;top:70.62px;font-size:6.86px;line-height:6.86px;color:#222;letter-spacing:0.048px;">Home</span>
<span class="t" style="left:290.5px;top:70.62px;font-size:6.86px;line-height:6.86px;color:#222;letter-spacing:-0.163px;">Share</span>
<span class="t" style="left:327px;top:70.62px;font-size:6.86px;line-height:6.86px;color:#222;letter-spacing:0.187px;">View</span>
<svg style="left:676.5px;top:70px;" width="6" height="4" viewBox="0 0 6 4"><path d="M0.500 3.500l2.500-2.800 2.500 2.800" fill="none" stroke="#8a8a8a" stroke-width="1"/></svg>
<svg style="left:688.5px;top:67.5px;" width="9" height="9" viewBox="0 0 9 9"><circle cx="4.500" cy="4.500" r="4.300" fill="#2a7ad4"/></svg>
<span class="t" style="left:691.2px;top:68.35px;font-size:7.00px;line-height:7.00px;color:#fff;letter-spacing:-0.475px;font-weight:bold;">?</span>
<div style="left:211px;top:79.5px;width:489.5px;height:58.5px;background:#f5f6f7;border-top:1px solid #dadbdc;border-bottom:1px solid #dadbdc;"></div>
<div style="left:246.8px;top:79.5px;width:34px;height:1px;background:#f5f6f7;"></div>
<div style="left:332px;top:83px;width:0.8px;height:52px;background:#e2e3e4;"></div>
<div style="left:451.5px;top:83px;width:0.8px;height:52px;background:#e2e3e4;"></div>
<div style="left:542.5px;top:83px;width:0.8px;height:52px;background:#e2e3e4;"></div>
<div style="left:625.5px;top:83px;width:0.8px;height:52px;background:#e2e3e4;"></div>
<svg style="left:219.5px;top:84px;" width="16" height="19" viewBox="0 0 16 19"><path d="M1 1h7l3 3v9h-10z" fill="#e4ebf5" stroke="#b4c2d6" stroke-width="0.9"/><path d="M5 5h7l3 3v10h-10z" fill="#edf2f9" stroke="#a6b6cc" stroke-width="0.9"/><path d="M7 10h5M7 12.500h5M7 15h5" stroke="#b8c6da" stroke-width="0.800"/></svg>
<span class="t" style="left:219px;top:107.11px;font-size:7.07px;line-height:7.07px;color:#a6a6a6;">Copy</span>
<svg style="left:246px;top:83.5px;" width="16" height="20" viewBox="0 0 16 20"><rect x="1" y="2" width="14" height="17" rx="1" fill="#c9aa7c" stroke="#8f7040" stroke-width="0.9"/><rect x="3" y="4.500" width="10" height="13" fill="#fbfbf6" stroke="#b0a890" stroke-width="0.500"/><path d="M4.500 8h7M4.500 10.500h7M4.500 13h7M4.500 15.500h5" stroke="#b9b9b0" stroke-width="0.700"/><rect x="5" y="0.800" width="6" height="3.200" rx="0.800" fill="#8a8f98" stroke="#5a6068" stroke-width="0.600"/></svg>
<span class="t" style="left:245px;top:107.11px;font-size:7.07px;line-height:7.07px;color:#2b2b2b;letter-spacing:-0.116px;">Paste</span>
<svg style="left:269.5px;top:85.5px;" width="7" height="8" viewBox="0 0 7 8"><path d="M1.500 0.300l3.500 5.200M5.500 0.300l-3.500 5.200" stroke="#8f9db8" stroke-width="1.300"/><circle cx="1.800" cy="6.500" r="1.200" fill="none" stroke="#8f9db8" stroke-width="1"/><circle cx="5.200" cy="6.500" r="1.200" fill="none" stroke="#8f9db8" stroke-width="1"/></svg>
<span class="t" style="left:280.5px;top:85.61px;font-size:7.07px;line-height:7.07px;color:#6a6a6a;">Cut</span>
<svg style="left:268.5px;top:99.5px;" width="9" height="7" viewBox="0 0 9 7"><rect x="0.500" y="0.500" width="8" height="6" fill="#b7c6e2" stroke="#8fa4cc" stroke-width="0.700"/><path d="M1.500 4.800l1.500-2.500 1.500 2M5.500 5h2" stroke="#fff" stroke-width="0.800" fill="none"/></svg>
<span class="t" style="left:280.5px;top:99.91px;font-size:7.07px;line-height:7.07px;color:#6a6a6a;letter-spacing:0.030px;">Copy path</span>
<svg style="left:269px;top:112.5px;" width="8" height="9" viewBox="0 0 8 9"><rect x="0.500" y="0.500" width="7" height="8" fill="#f4f7fb" stroke="#9ab0cc" stroke-width="0.700"/><path d="M2.500 6l3-3M3.500 3h2v2" stroke="#5a8ad0" stroke-width="0.800" fill="none"/></svg>
<span class="t" style="left:280.5px;top:113.91px;font-size:7.07px;line-height:7.07px;color:#6a6a6a;letter-spacing:-0.050px;">Paste shortcut</span>
<span class="t" style="left:255.5px;top:127.71px;font-size:7.07px;line-height:7.07px;color:#8f8f8f;letter-spacing:0.137px;">Clipboard</span>
<svg style="left:341px;top:84px;" width="18" height="19" viewBox="0 0 18 19"><path d="M1 2l7-1.500v17l-7-1.500z" fill="#b9c7da"/><path d="M6 1.500l9-1v17l-9 1z" fill="#d3dcea"/><path d="M9 9h5v-2.500l4 4-4 4v-2.500h-5z" fill="#8fa6c6"/></svg>
<span class="t" style="left:341px;top:107.11px;font-size:7.07px;line-height:7.07px;color:#a6a6a6;letter-spacing:0.177px;">Move</span>
<span class="t" style="left:345px;top:115.31px;font-size:7.07px;line-height:7.07px;color:#a6a6a6;letter-spacing:0.052px;">to</span>
<span class="t" style="left:352px;top:116.38px;font-size:5.50px;line-height:5.50px;color:#a6a6a6;letter-spacing:-0.125px;">▾</span>
<svg style="left:366.5px;top:84px;" width="18" height="19" viewBox="0 0 18 19"><path d="M1 2l7-1.500v17l-7-1.500z" fill="#b9c7da"/><path d="M6 1.500l9-1v17l-9 1z" fill="#d3dcea"/><path d="M10 7h4l2 2v6h-6z" fill="#f2f6fb" stroke="#a9b8cc" stroke-width="0.700"/></svg>
<span class="t" style="left:367.5px;top:107.11px;font-size:7.07px;line-height:7.07px;color:#a6a6a6;">Copy</span>
<span class="t" style="left:371px;top:115.31px;font-size:7.07px;line-height:7.07px;color:#a6a6a6;letter-spacing:0.052px;">to</span>
<span class="t" style="left:378px;top:116.38px;font-size:5.50px;line-height:5.50px;color:#a6a6a6;letter-spacing:-0.125px;">▾</span>
<svg style="left:397px;top:86px;" width="18" height="16" viewBox="0 0 18 16"><path d="M1.500 1c4 3 9 8 15 14M16.500 1c-5 4-10 9-15 14" stroke="#8f9cb0" stroke-width="2.400" fill="none" stroke-linecap="round"/></svg>
<span class="t" style="left:394.5px;top:107.11px;font-size:7.07px;line-height:7.07px;color:#2b2b2b;letter-spacing:0.343px;">Delete</span>
<span class="t" style="left:404px;top:116.38px;font-size:5.50px;line-height:5.50px;color:#333;letter-spacing:-0.125px;">▾</span>
<svg style="left:424px;top:88px;" width="19" height="12" viewBox="0 0 19 12"><rect x="0.500" y="2.500" width="13" height="6.500" fill="#e4ebf4" stroke="#a9b8cc" stroke-width="0.900"/><rect x="2.500" y="4.500" width="7" height="2.500" fill="#b9c8dc"/><path d="M13.500 0.500h4M15.500 0.500v11M13.500 11.500h4" stroke="#a0aec2" stroke-width="0.900" fill="none"/></svg>
<span class="t" style="left:420.5px;top:107.11px;font-size:7.07px;line-height:7.07px;color:#a6a6a6;letter-spacing:0.046px;">Rename</span>
<span class="t" style="left:377px;top:127.71px;font-size:7.07px;line-height:7.07px;color:#8f8f8f;letter-spacing:0.164px;">Organize</span>
<svg style="left:459.5px;top:84px;" width="17" height="19" viewBox="0 0 17 19"><path d="M1 2l6-1.500v17l-6-1.500z" fill="#e3b63a"/><path d="M5 1.300l10-1v17.200l-10 1z" fill="#f6dc86"/><path d="M8 1l7-.7v17.200l-7 .7z" fill="#f2cf65" opacity=".8"/></svg>
<span class="t" style="left:461px;top:107.11px;font-size:7.07px;line-height:7.07px;color:#2b2b2b;letter-spacing:-0.049px;">New</span>
<span class="t" style="left:458px;top:115.31px;font-size:7.07px;line-height:7.07px;color:#2b2b2b;letter-spacing:0.302px;">folder</span>
<svg style="left:482.5px;top:85px;" width="10" height="9" viewBox="0 0 10 9"><rect x="0.500" y="0.500" width="6" height="6" fill="#fff" stroke="#8a9ab0" stroke-width="0.700"/><rect x="3" y="2.500" width="6.500" height="6" fill="#fff" stroke="#6a7a90" stroke-width="0.700"/></svg>
<span class="t" style="left:495px;top:85.61px;font-size:7.07px;line-height:7.07px;color:#2b2b2b;">New item</span>
<span class="t" style="left:527px;top:86.97px;font-size:5.50px;line-height:5.50px;color:#2b2b2b;letter-spacing:-0.125px;">▾</span>
<svg style="left:482.5px;top:99px;" width="10" height="9" viewBox="0 0 10 9"><rect x="2" y="2" width="7.500" height="6.500" fill="#fff" stroke="#6a7a90" stroke-width="0.700"/><path d="M0.500 5c0-3 2-4 5-4" stroke="#5a8ad0" stroke-width="0.900" fill="none"/></svg>
<span class="t" style="left:495px;top:99.91px;font-size:7.07px;line-height:7.07px;color:#2b2b2b;letter-spacing:-0.381px;">Easy access</span>
<span class="t" style="left:533px;top:100.77px;font-size:5.50px;line-height:5.50px;color:#2b2b2b;letter-spacing:-0.125px;">▾</span>
<span class="t" style="left:489.5px;top:127.71px;font-size:7.07px;line-height:7.07px;color:#8f8f8f;letter-spacing:0.118px;">New</span>
<svg style="left:554.5px;top:84px;" width="18" height="19" viewBox="0 0 18 19"><path d="M2 0.500h10l4 4v14h-14z" fill="#fff" stroke="#c4c4c4" stroke-width="0.800"/><path d="M6 12l3 4 6-8" stroke="#e8873a" stroke-width="2.400" fill="none"/></svg>
<span class="t" style="left:546px;top:107.11px;font-size:7.07px;line-height:7.07px;color:#2b2b2b;letter-spacing:0.127px;">Properties</span>
<span class="t" style="left:560.5px;top:116.38px;font-size:5.50px;line-height:5.50px;color:#333;letter-spacing:-0.125px;">▾</span>
<svg style="left:584px;top:84.5px;" width="10" height="10" viewBox="0 0 10 10"><path d="M1 0.500h5l2 2v7h-7z" fill="#f4f7fb" stroke="#b4c0d0" stroke-width="0.700"/><path d="M4 6h4v3.500h-4z" fill="#cfe0c8" stroke="#a0b8a0" stroke-width="0.500"/></svg>
<span class="t" style="left:597px;top:85.61px;font-size:7.07px;line-height:7.07px;color:#a6a6a6;letter-spacing:-0.324px;">Open</span>
<span class="t" style="left:616px;top:86.97px;font-size:5.50px;line-height:5.50px;color:#a6a6a6;letter-spacing:-0.125px;">▾</span>
<svg style="left:584px;top:98.5px;" width="10" height="10" viewBox="0 0 10 10"><path d="M1 0.500h5l2 2v7h-7z" fill="#f4f7fb" stroke="#b4c0d0" stroke-width="0.700"/><path d="M3 7l4-4" stroke="#a8b8d0" stroke-width="1"/></svg>
<span class="t" style="left:597px;top:99.91px;font-size:7.07px;line-height:7.07px;color:#a6a6a6;letter-spacing:-0.296px;">Edit</span>
<span class="t" style="left:575px;top:127.71px;font-size:7.07px;line-height:7.07px;color:#8f8f8f;letter-spacing:0.176px;">Open</span>
<svg style="left:630.5px;top:85px;" width="10" height="10" viewBox="0 0 10 10"><rect x="0.500" y="0.500" width="4" height="4" fill="#cfe4f8" stroke="#3a8ad8" stroke-width="0.800"/><rect x="5.500" y="0.500" width="4" height="4" fill="#cfe4f8" stroke="#3a8ad8" stroke-width="0.800"/><rect x="0.500" y="5.500" width="4" height="4" fill="#cfe4f8" stroke="#3a8ad8" stroke-width="0.800"/><rect x="5.500" y="5.500" width="4" height="4" fill="#cfe4f8" stroke="#3a8ad8" stroke-width="0.800"/></svg>
<span class="t" style="left:642.5px;top:85.61px;font-size:7.07px;line-height:7.07px;color:#2b2b2b;letter-spacing:-0.069px;">Select all</span>
<svg style="left:630.5px;top:99px;" width="10" height="10" viewBox="0 0 10 10"><rect x="0.500" y="0.500" width="3.500" height="3.500" fill="#fff" stroke="#a8a8a8" stroke-width="0.600"/><rect x="5.500" y="0.500" width="3.500" height="3.500" fill="#fff" stroke="#a8a8a8" stroke-width="0.600"/><rect x="0.500" y="5.500" width="3.500" height="3.500" fill="#fff" stroke="#a8a8a8" stroke-width="0.600"/><rect x="5.500" y="5.500" width="3.500" height="3.500" fill="#fff" stroke="#a8a8a8" stroke-width="0.600"/></svg>
<span class="t" style="left:642.5px;top:99.91px;font-size:7.07px;line-height:7.07px;color:#2b2b2b;letter-spacing:-0.032px;">Select none</span>
<svg style="left:630.5px;top:112.5px;" width="10" height="10" viewBox="0 0 10 10"><rect x="5.500" y="0.500" width="4" height="4" fill="#cfe4f8" stroke="#3a8ad8" stroke-width="0.800"/><rect x="0.500" y="5.500" width="4" height="4" fill="#cfe4f8" stroke="#3a8ad8" stroke-width="0.800"/><rect x="0.500" y="0.500" width="3.500" height="3.500" fill="#fff" stroke="#a8a8a8" stroke-width="0.600"/><rect x="5.500" y="5.500" width="3.500" height="3.500" fill="#fff" stroke="#a8a8a8" stroke-width="0.600"/></svg>
<span class="t" style="left:642.5px;top:113.91px;font-size:7.07px;line-height:7.07px;color:#2b2b2b;letter-spacing:0.028px;">Invert selection</span>
<span class="t" style="left:652px;top:127.71px;font-size:7.07px;line-height:7.07px;color:#8f8f8f;letter-spacing:-0.275px;">Select</span>
<div style="left:211px;top:138px;width:489.5px;height:277.3px;background:#fff;"></div>
<svg style="left:218px;top:144px;" width="9" height="9" viewBox="0 0 9 9"><circle cx="4.500" cy="4.500" r="4" fill="#fff" stroke="#d9d9d9" stroke-width="0.800"/></svg>
<svg style="left:236.5px;top:144px;" width="9" height="9" viewBox="0 0 9 9"><circle cx="4.500" cy="4.500" r="4" fill="#fff" stroke="#d9d9d9" stroke-width="0.800"/></svg>
<svg style="left:219.5px;top:146px;" width="6" height="5" viewBox="0 0 6 5"><path d="M5.500 2.500h-4.500M3 0.500l-2 2 2 2" stroke="#dcdcdc" stroke-width="0.800" fill="none"/></svg>
<svg style="left:238.5px;top:146px;" width="6" height="5" viewBox="0 0 6 5"><path d="M0.500 2.500h4.500M3 0.500l2 2-2 2" stroke="#dcdcdc" stroke-width="0.800" fill="none"/></svg>
<span class="t" style="left:253px;top:145.97px;font-size:5.50px;line-height:5.50px;color:#c8c8c8;letter-spacing:-0.125px;">▾</span>
<svg style="left:266px;top:144.5px;" width="7" height="8" viewBox="0 0 7 8"><path d="M3.500 7.500v-6.500M0.800 3.500l2.700-2.800 2.700 2.800" stroke="#777" stroke-width="1.200" fill="none"/></svg>
<div style="left:277.5px;top:141.5px;width:282px;height:15.5px;background:#fff;border:1px solid #d9d9d9;"></div>
<svg style="left:280.5px;top:143.5px;" width="8" height="10" viewBox="0 0 8 9"><path d="M0.300 1.300l3.500-1v8.600l-3.500-.700z" fill="#f3d56a"/><path d="M0.300 1.300l1.600-.450v8.250l-1.600-.300z" fill="#f9e9a0"/><path d="M4.200 0.300l3.300.700v7.300l-3.300.600z" fill="#f1cd58"/><path d="M4.200 0.300l1.500.300v8.050l-1.500.250z" fill="#f7e08a"/><path d="M3.800 0.300h.5v8.600h-.5z" fill="#c79a22"/></svg>
<span class="t" style="left:292px;top:143.35px;font-size:9.00px;line-height:9.00px;color:#444;letter-spacing:0.495px;">«</span>
<span class="t" style="left:303px;top:145.15px;font-size:7.37px;line-height:7.37px;color:#222;letter-spacing:0.207px;">Terminal</span>
<span class="t" style="left:337px;top:145.12px;font-size:6.50px;line-height:6.50px;color:#222;letter-spacing:-0.875px;">▸</span>
<div style="left:346px;top:143px;width:128px;height:11.5px;background:linear-gradient(90deg,rgba(205,205,205,0),rgba(205,205,205,.8) 8%,rgba(215,215,215,.8) 92%,rgba(205,205,205,0));filter:blur(1.500px);"></div>
<span class="t" style="left:477px;top:145.12px;font-size:6.50px;line-height:6.50px;color:#111;letter-spacing:-0.875px;">▸</span>
<svg style="left:535.5px;top:147px;" width="6" height="4" viewBox="0 0 6 4"><path d="M0.500 0.500l2.500 2.800 2.500-2.800" fill="none" stroke="#555" stroke-width="0.9"/></svg>
<svg style="left:548px;top:144.5px;" width="7" height="8" viewBox="0 0 7 8"><path d="M5.800 3.200a2.600 2.600 0 1 0 .300 2.300" fill="none" stroke="#666" stroke-width="0.8"/><path d="M4.300 0.800l1.800 2.400-2.600.400" fill="#666"/></svg>
<div style="left:566.5px;top:141.5px;width:127px;height:15.5px;background:#fff;border:1px solid #d9d9d9;"></div>
<span class="t" style="left:572px;top:145.15px;font-size:7.37px;line-height:7.37px;color:#6a6a6a;letter-spacing:-0.308px;">Search</span>
<div style="left:596px;top:143.5px;width:84px;height:10.5px;background:rgba(225,225,225,.8);filter:blur(1.500px);"></div>
<svg style="left:680.5px;top:144.5px;" width="8" height="8" viewBox="0 0 8 8"><circle cx="4.800" cy="3.200" r="2.400" fill="none" stroke="#6a6a6a" stroke-width="0.900"/><path d="M3.100 4.900l-2.600 2.600" stroke="#6a6a6a" stroke-width="1.100"/></svg>
<div style="left:211px;top:370.2px;width:87px;height:12.8px;background:#e9e9e9;"></div>
<svg style="left:229.5px;top:163.5px;" width="10" height="8" viewBox="0 0 10 8"><rect x="0.500" y="0.500" width="9" height="6" fill="#2a68c0" stroke="#1a3a7a" stroke-width="0.600"/><rect x="0.500" y="5.500" width="9" height="1.500" fill="#8ab0e0"/></svg>
<span class="t" style="left:242.5px;top:164.09px;font-size:7.28px;line-height:7.28px;color:#2b2b2b;letter-spacing:-0.031px;-webkit-text-stroke:0.15px #2b2b2b;">Desktop</span>
<svg style="left:230px;top:176.1px;" width="8" height="9" viewBox="0 0 8 9"><path d="M0.300 1.300l3.500-1v8.600l-3.500-.700z" fill="#f3d56a"/><path d="M0.300 1.300l1.600-.450v8.250l-1.600-.300z" fill="#f9e9a0"/><path d="M4.200 0.300l3.300.700v7.300l-3.300.600z" fill="#f1cd58"/><path d="M4.200 0.300l1.500.300v8.050l-1.500.250z" fill="#f7e08a"/><path d="M3.800 0.300h.5v8.600h-.5z" fill="#c79a22"/></svg>
<svg style="left:233px;top:180.1px;" width="5" height="5" viewBox="0 0 5 5"><path d="M2.500 0v3M0.500 2l2 2.500 2-2.500z" fill="#2a78d0" stroke="#2a78d0" stroke-width="0.800"/></svg>
<span class="t" style="left:242.5px;top:177.19px;font-size:7.28px;line-height:7.28px;color:#2b2b2b;letter-spacing:0.108px;-webkit-text-stroke:0.15px #2b2b2b;">Downloads</span>
<svg style="left:229.5px;top:189.2px;" width="9" height="9" viewBox="0 0 9 9"><circle cx="4.500" cy="4.500" r="4.300" fill="#d9272e"/><path d="M2.500 6.300v-3.300l2 2 2-2v3.300" stroke="#fff" stroke-width="0.900" fill="none"/></svg>
<span class="t" style="left:242.5px;top:190.29px;font-size:7.28px;line-height:7.28px;color:#2b2b2b;letter-spacing:-0.115px;-webkit-text-stroke:0.15px #2b2b2b;">MEGAsync</span>
<svg style="left:229.5px;top:202.3px;" width="10" height="9" viewBox="0 0 10 9"><rect x="0.500" y="0.500" width="7" height="6" fill="#e8eef6" stroke="#8a9ab0" stroke-width="0.600"/><rect x="2" y="2" width="7.500" height="6.500" fill="#cfe0f4" stroke="#6a8ab0" stroke-width="0.600"/><path d="M3 7l2-2.500 1.500 1.500 1.500-2" stroke="#4a8a4a" stroke-width="0.700" fill="none"/></svg>
<span class="t" style="left:242.5px;top:203.39px;font-size:7.28px;line-height:7.28px;color:#2b2b2b;letter-spacing:-0.088px;-webkit-text-stroke:0.15px #2b2b2b;">Recent places</span>
<svg style="left:230px;top:215.4px;" width="8" height="9" viewBox="0 0 8 9"><path d="M0.300 1.300l3.500-1v8.600l-3.500-.700z" fill="#f3d56a"/><path d="M0.300 1.300l1.600-.450v8.250l-1.600-.300z" fill="#f9e9a0"/><path d="M4.200 0.300l3.300.700v7.300l-3.300.600z" fill="#f1cd58"/><path d="M4.200 0.300l1.500.300v8.050l-1.500.250z" fill="#f7e08a"/><path d="M3.800 0.300h.5v8.600h-.5z" fill="#c79a22"/></svg>
<span class="t" style="left:242.5px;top:216.49px;font-size:7.28px;line-height:7.28px;color:#2b2b2b;letter-spacing:0.034px;-webkit-text-stroke:0.15px #2b2b2b;">Streaming</span>
<svg style="left:230px;top:228.5px;" width="8" height="9" viewBox="0 0 8 9"><path d="M0.300 1.300l3.500-1v8.600l-3.500-.700z" fill="#f3d56a"/><path d="M0.300 1.300l1.600-.450v8.250l-1.600-.300z" fill="#f9e9a0"/><path d="M4.200 0.300l3.300.700v7.300l-3.300.600z" fill="#f1cd58"/><path d="M4.200 0.300l1.500.300v8.050l-1.500.250z" fill="#f7e08a"/><path d="M3.800 0.300h.5v8.600h-.5z" fill="#c79a22"/></svg>
<span class="t" style="left:242.5px;top:229.59px;font-size:7.28px;line-height:7.28px;color:#2b2b2b;letter-spacing:0.082px;-webkit-text-stroke:0.15px #2b2b2b;">Shortcuts</span>
<svg style="left:230px;top:241.6px;" width="8" height="9" viewBox="0 0 8 9"><path d="M0.300 1.300l3.500-1v8.600l-3.500-.700z" fill="#f3d56a"/><path d="M0.300 1.300l1.600-.450v8.250l-1.600-.300z" fill="#f9e9a0"/><path d="M4.200 0.300l3.300.700v7.300l-3.300.600z" fill="#f1cd58"/><path d="M4.200 0.300l1.500.300v8.050l-1.500.250z" fill="#f7e08a"/><path d="M3.800 0.300h.5v8.600h-.5z" fill="#c79a22"/></svg>
<span class="t" style="left:242.5px;top:242.69px;font-size:7.28px;line-height:7.28px;color:#2b2b2b;letter-spacing:-0.170px;-webkit-text-stroke:0.15px #2b2b2b;">Presets</span>
<svg style="left:230px;top:254.7px;" width="8" height="9" viewBox="0 0 8 9"><path d="M0.300 1.300l3.500-1v8.600l-3.500-.700z" fill="#f3d56a"/><path d="M0.300 1.300l1.600-.450v8.250l-1.600-.300z" fill="#f9e9a0"/><path d="M4.200 0.300l3.300.700v7.300l-3.300.600z" fill="#f1cd58"/><path d="M4.200 0.300l1.500.300v8.050l-1.500.250z" fill="#f7e08a"/><path d="M3.800 0.300h.5v8.600h-.5z" fill="#c79a22"/></svg>
<span class="t" style="left:242.5px;top:255.79px;font-size:7.28px;line-height:7.28px;color:#2b2b2b;letter-spacing:0.064px;-webkit-text-stroke:0.15px #2b2b2b;">Amazon Drive</span>
<svg style="left:230px;top:293.8px;" width="8" height="9" viewBox="0 0 8 9"><path d="M0.300 1.300l3.500-1v8.600l-3.500-.700z" fill="#f3d56a"/><path d="M0.300 1.300l1.600-.450v8.250l-1.600-.300z" fill="#f9e9a0"/><path d="M4.200 0.300l3.300.700v7.300l-3.300.600z" fill="#f1cd58"/><path d="M4.200 0.300l1.500.300v8.050l-1.500.250z" fill="#f7e08a"/><path d="M3.800 0.300h.5v8.600h-.5z" fill="#c79a22"/></svg>
<svg style="left:233px;top:298.3px;" width="6" height="4.5" viewBox="0 0 6 4.5"><rect x="0.300" y="0.300" width="5.400" height="3.500" fill="#2a68c0" stroke="#1a3a7a" stroke-width="0.500"/></svg>
<span class="t" style="left:242.5px;top:294.89px;font-size:7.28px;line-height:7.28px;color:#2b2b2b;letter-spacing:-0.031px;-webkit-text-stroke:0.15px #2b2b2b;">Desktop</span>
<svg style="left:230px;top:306.9px;" width="8" height="9" viewBox="0 0 8 9"><path d="M0.300 1.300l3.500-1v8.600l-3.500-.700z" fill="#f3d56a"/><path d="M0.300 1.300l1.600-.450v8.250l-1.600-.300z" fill="#f9e9a0"/><path d="M4.200 0.300l3.300.700v7.300l-3.300.600z" fill="#f1cd58"/><path d="M4.200 0.300l1.500.300v8.050l-1.500.250z" fill="#f7e08a"/><path d="M3.800 0.300h.5v8.600h-.5z" fill="#c79a22"/></svg>
<svg style="left:232.5px;top:308.9px;" width="5" height="7" viewBox="0 0 5 7"><rect x="0.300" y="0.300" width="4.400" height="6" fill="#fff" stroke="#9a9a9a" stroke-width="0.500"/><path d="M1.200 2h2.500M1.200 3.500h2.500M1.200 5h2.500" stroke="#aaa" stroke-width="0.500"/></svg>
<span class="t" style="left:242.5px;top:307.99px;font-size:7.28px;line-height:7.28px;color:#2b2b2b;letter-spacing:0.130px;-webkit-text-stroke:0.15px #2b2b2b;">Documents</span>
<svg style="left:230px;top:320px;" width="8" height="9" viewBox="0 0 8 9"><path d="M0.300 1.300l3.500-1v8.600l-3.500-.700z" fill="#f3d56a"/><path d="M0.300 1.300l1.600-.450v8.250l-1.600-.300z" fill="#f9e9a0"/><path d="M4.200 0.300l3.300.700v7.300l-3.300.600z" fill="#f1cd58"/><path d="M4.200 0.300l1.500.300v8.050l-1.500.250z" fill="#f7e08a"/><path d="M3.800 0.300h.5v8.600h-.5z" fill="#c79a22"/></svg>
<svg style="left:233px;top:324px;" width="5" height="5" viewBox="0 0 5 5"><path d="M2.500 0v3M0.500 2l2 2.500 2-2.500z" fill="#2a78d0" stroke="#2a78d0" stroke-width="0.800"/></svg>
<span class="t" style="left:242.5px;top:321.09px;font-size:7.28px;line-height:7.28px;color:#2b2b2b;letter-spacing:0.108px;-webkit-text-stroke:0.15px #2b2b2b;">Downloads</span>
<svg style="left:230px;top:333.1px;" width="8" height="9" viewBox="0 0 8 9"><path d="M0.300 1.300l3.500-1v8.600l-3.500-.700z" fill="#f3d56a"/><path d="M0.300 1.300l1.600-.450v8.250l-1.600-.300z" fill="#f9e9a0"/><path d="M4.200 0.300l3.300.700v7.300l-3.300.600z" fill="#f1cd58"/><path d="M4.200 0.300l1.500.300v8.050l-1.500.250z" fill="#f7e08a"/><path d="M3.800 0.300h.5v8.600h-.5z" fill="#c79a22"/></svg>
<svg style="left:233px;top:336.1px;" width="5" height="6" viewBox="0 0 5 6"><path d="M1.500 4.500v-3.500l2.500-.7v3.500" stroke="#2a88d8" stroke-width="0.800" fill="none"/><circle cx="1" cy="4.700" r="1" fill="#2a88d8"/><circle cx="3.500" cy="4" r="1" fill="#2a88d8"/></svg>
<span class="t" style="left:242.5px;top:334.19px;font-size:7.28px;line-height:7.28px;color:#2b2b2b;letter-spacing:0.097px;-webkit-text-stroke:0.15px #2b2b2b;">Music</span>
<svg style="left:230px;top:346.7px;" width="8" height="9" viewBox="0 0 8 9"><path d="M0.300 1.300l3.500-1v8.600l-3.500-.700z" fill="#f3d56a"/><path d="M0.300 1.300l1.600-.450v8.250l-1.600-.300z" fill="#f9e9a0"/><path d="M4.200 0.300l3.300.700v7.300l-3.300.600z" fill="#f1cd58"/><path d="M4.200 0.300l1.500.300v8.050l-1.500.250z" fill="#f7e08a"/><path d="M3.800 0.300h.5v8.600h-.5z" fill="#c79a22"/></svg>
<svg style="left:232.5px;top:350.2px;" width="6" height="5" viewBox="0 0 6 5"><rect x="0.300" y="0.300" width="5.400" height="4.200" fill="#bfe0f8" stroke="#6a8ab0" stroke-width="0.500"/><path d="M0.500 4.300l1.800-2 1.300 1.200 1-1 1 1.800z" fill="#5aa05a"/></svg>
<span class="t" style="left:242.5px;top:347.79px;font-size:7.28px;line-height:7.28px;color:#2b2b2b;letter-spacing:-0.038px;-webkit-text-stroke:0.15px #2b2b2b;">Pictures</span>
<svg style="left:230px;top:359.9px;" width="8" height="9" viewBox="0 0 8 9"><path d="M0.300 1.300l3.500-1v8.600l-3.500-.700z" fill="#f3d56a"/><path d="M0.300 1.300l1.600-.450v8.250l-1.600-.300z" fill="#f9e9a0"/><path d="M4.200 0.300l3.300.700v7.300l-3.300.600z" fill="#f1cd58"/><path d="M4.200 0.300l1.500.300v8.050l-1.500.250z" fill="#f7e08a"/><path d="M3.800 0.300h.5v8.600h-.5z" fill="#c79a22"/></svg>
<svg style="left:233px;top:362.9px;" width="5" height="6" viewBox="0 0 5 6"><rect x="0.300" y="0.300" width="4.400" height="5.400" fill="#4a5a6a" stroke="#2a3a4a" stroke-width="0.500"/><path d="M1 1h.8M1 2.500h.8M1 4h.8M3.200 1h.8M3.200 2.500h.8M3.200 4h.8" stroke="#fff" stroke-width="0.500"/></svg>
<span class="t" style="left:242.5px;top:360.99px;font-size:7.28px;line-height:7.28px;color:#2b2b2b;letter-spacing:-0.023px;-webkit-text-stroke:0.15px #2b2b2b;">Videos</span>
<svg style="left:224px;top:280.5px;" width="10" height="9" viewBox="0 0 10 9"><rect x="1.500" y="0.500" width="8" height="5.500" fill="#3a78c8" stroke="#1a4a8a" stroke-width="0.600"/><path d="M3 8h5M5.500 6v2" stroke="#6a6a6a" stroke-width="0.900"/><rect x="0" y="4" width="2.500" height="4.500" fill="#d8d8d8" stroke="#7a7a7a" stroke-width="0.500"/></svg>
<span class="t" style="left:237px;top:281.79px;font-size:7.28px;line-height:7.28px;color:#2b2b2b;letter-spacing:-0.271px;-webkit-text-stroke:0.15px #2b2b2b;">This PC</span>
<svg style="left:229.5px;top:372px;" width="10" height="10" viewBox="0 0 10 10"><rect x="0.500" y="0.500" width="3.800" height="3.500" fill="#28a8e8"/><rect x="5" y="0.500" width="3.800" height="3.500" fill="#28a8e8"/><rect x="0.500" y="4.500" width="9" height="1.500" fill="#28a8e8"/><rect x="0" y="6.500" width="10" height="3" fill="#6a7a8a"/></svg>
<span class="t" style="left:242.5px;top:373.59px;font-size:7.28px;line-height:7.28px;color:#2b2b2b;letter-spacing:0.067px;-webkit-text-stroke:0.15px #2b2b2b;">Windows (C:)</span>
<svg style="left:224px;top:398.5px;" width="9" height="3" viewBox="0 0 9 3"><path d="M0.500 3c0-2 2-2.800 4-2.800s4 .800 4 2.800" fill="#b8cce0" stroke="#8aa0b8" stroke-width="0.500"/></svg>
<div style="left:237px;top:399.7px;width:1.6px;height:1px;background:#4a4a4a;opacity:.4;"></div>
<div style="left:241px;top:399.7px;width:1.6px;height:1px;background:#4a4a4a;opacity:.4;"></div>
<div style="left:246px;top:399.7px;width:1.6px;height:1px;background:#4a4a4a;opacity:.4;"></div>
<div style="left:252px;top:399.7px;width:1.6px;height:1px;background:#4a4a4a;opacity:.4;"></div>
<div style="left:257px;top:399.7px;width:1.6px;height:1px;background:#4a4a4a;opacity:.4;"></div>
<div style="left:298px;top:161.5px;width:10.5px;height:239.5px;background:#fff;border:1px solid #e4e4e4;"></div>
<svg style="left:300.5px;top:165px;" width="6" height="4" viewBox="0 0 6 4"><path d="M0.500 3.500l2.500-2.800 2.500 2.800" fill="none" stroke="#555" stroke-width="0.9"/></svg>
<div style="left:298.5px;top:172px;width:9.5px;height:196px;background:#cdcdcd;"></div>
<div style="left:301px;top:273.6px;width:4.5px;height:0.7px;background:#555;"></div>
<div style="left:301px;top:275.3px;width:4.5px;height:0.7px;background:#555;"></div>
<div style="left:301px;top:277px;width:4.5px;height:0.7px;background:#555;"></div>
<svg style="left:300.5px;top:394px;" width="6" height="4" viewBox="0 0 6 4"><path d="M0.500 0.500l2.500 2.800 2.500-2.800" fill="none" stroke="#555" stroke-width="0.9"/></svg>
<div style="left:319px;top:161.5px;width:362px;height:0.1px;background:#fff;"></div>
<div style="left:480px;top:161.5px;width:0.8px;height:14px;background:#e5e5e5;"></div>
<div style="left:554.5px;top:161.5px;width:0.8px;height:14px;background:#e5e5e5;"></div>
<div style="left:630px;top:161.5px;width:0.8px;height:14px;background:#e5e5e5;"></div>
<div style="left:680.5px;top:161.5px;width:0.8px;height:14px;background:#e5e5e5;"></div>
<svg style="left:395px;top:160.5px;" width="6" height="4" viewBox="0 0 6 4"><path d="M0.500 3.200l2.500-2.500 2.500 2.500" fill="none" stroke="#7a7a7a" stroke-width="0.800"/></svg>
<span class="t" style="left:321px;top:165.38px;font-size:7.30px;line-height:7.30px;color:#4c607a;letter-spacing:0.006px;-webkit-text-stroke:0.12px #4c607a;">Name</span>
<span class="t" style="left:484.5px;top:165.38px;font-size:7.30px;line-height:7.30px;color:#4c607a;letter-spacing:0.073px;-webkit-text-stroke:0.12px #4c607a;">Date modified</span>
<span class="t" style="left:559.5px;top:165.38px;font-size:7.30px;line-height:7.30px;color:#4c607a;letter-spacing:-0.082px;-webkit-text-stroke:0.12px #4c607a;">Type</span>
<span class="t" style="left:634.5px;top:165.38px;font-size:7.30px;line-height:7.30px;color:#4c607a;letter-spacing:-0.301px;-webkit-text-stroke:0.12px #4c607a;">Size</span>
<div style="left:319px;top:219px;width:358.5px;height:13.6px;background:#cce6fa;border:1px solid #9fd0f4;"></div>
<svg style="left:322px;top:182.2px;" width="8" height="9.5" viewBox="0 0 8 9"><path d="M0.300 1.300l3.500-1v8.600l-3.500-.700z" fill="#f3d56a"/><path d="M0.300 1.300l1.600-.450v8.250l-1.600-.300z" fill="#f9e9a0"/><path d="M4.200 0.300l3.300.700v7.300l-3.300.600z" fill="#f1cd58"/><path d="M4.200 0.300l1.500.300v8.050l-1.500.250z" fill="#f7e08a"/><path d="M3.800 0.300h.5v8.600h-.5z" fill="#c79a22"/></svg>
<span class="t" style="left:334px;top:183.68px;font-size:7.30px;line-height:7.30px;color:#222;letter-spacing:0.253px;-webkit-text-stroke:0.12px #222;">config</span>
<span class="t" style="left:484.5px;top:183.68px;font-size:7.30px;line-height:7.30px;color:#6d6d6d;letter-spacing:-0.068px;-webkit-text-stroke:0.12px #6d6d6d;">9/12/2019 11:15 PM</span>
<span class="t" style="left:559.5px;top:183.68px;font-size:7.30px;line-height:7.30px;color:#6d6d6d;letter-spacing:0.040px;-webkit-text-stroke:0.12px #6d6d6d;">File folder</span>
<svg style="left:322px;top:195.28px;" width="8" height="9.5" viewBox="0 0 8 9"><path d="M0.300 1.300l3.500-1v8.600l-3.500-.700z" fill="#f3d56a"/><path d="M0.300 1.300l1.600-.450v8.250l-1.600-.300z" fill="#f9e9a0"/><path d="M4.200 0.300l3.300.700v7.300l-3.300.600z" fill="#f1cd58"/><path d="M4.200 0.300l1.500.300v8.050l-1.500.250z" fill="#f7e08a"/><path d="M3.800 0.300h.5v8.600h-.5z" fill="#c79a22"/></svg>
<span class="t" style="left:334px;top:196.76px;font-size:7.30px;line-height:7.30px;color:#222;letter-spacing:0.142px;-webkit-text-stroke:0.12px #222;">history</span>
<span class="t" style="left:484.5px;top:196.76px;font-size:7.30px;line-height:7.30px;color:#6d6d6d;letter-spacing:-0.068px;-webkit-text-stroke:0.12px #6d6d6d;">9/12/2019 11:15 PM</span>
<span class="t" style="left:559.5px;top:196.76px;font-size:7.30px;line-height:7.30px;color:#6d6d6d;letter-spacing:0.040px;-webkit-text-stroke:0.12px #6d6d6d;">File folder</span>
<svg style="left:322px;top:208.36px;" width="8" height="9.5" viewBox="0 0 8 9"><path d="M0.300 1.300l3.500-1v8.600l-3.500-.700z" fill="#f3d56a"/><path d="M0.300 1.300l1.600-.450v8.250l-1.600-.300z" fill="#f9e9a0"/><path d="M4.200 0.300l3.300.700v7.300l-3.300.600z" fill="#f1cd58"/><path d="M4.200 0.300l1.500.300v8.050l-1.500.250z" fill="#f7e08a"/><path d="M3.800 0.300h.5v8.600h-.5z" fill="#c79a22"/></svg>
<span class="t" style="left:334px;top:209.84px;font-size:7.30px;line-height:7.30px;color:#222;letter-spacing:0.026px;-webkit-text-stroke:0.12px #222;">logs</span>
<span class="t" style="left:484.5px;top:209.84px;font-size:7.30px;line-height:7.30px;color:#6d6d6d;letter-spacing:-0.068px;-webkit-text-stroke:0.12px #6d6d6d;">9/12/2019 11:14 PM</span>
<span class="t" style="left:559.5px;top:209.84px;font-size:7.30px;line-height:7.30px;color:#6d6d6d;letter-spacing:0.040px;-webkit-text-stroke:0.12px #6d6d6d;">File folder</span>
<svg style="left:322px;top:221.44px;" width="8" height="9.5" viewBox="0 0 8 9"><path d="M0.300 1.300l3.500-1v8.600l-3.500-.700z" fill="#f3d56a"/><path d="M0.300 1.300l1.600-.450v8.250l-1.600-.300z" fill="#f9e9a0"/><path d="M4.200 0.300l3.300.700v7.300l-3.300.600z" fill="#f1cd58"/><path d="M4.200 0.300l1.500.300v8.050l-1.500.250z" fill="#f7e08a"/><path d="M3.800 0.300h.5v8.600h-.5z" fill="#c79a22"/></svg>
<span class="t" style="left:334px;top:222.92px;font-size:7.30px;line-height:7.30px;color:#222;letter-spacing:0.154px;-webkit-text-stroke:0.12px #222;">MQL4</span>
<span class="t" style="left:484.5px;top:222.92px;font-size:7.30px;line-height:7.30px;color:#6d6d6d;letter-spacing:-0.068px;-webkit-text-stroke:0.12px #6d6d6d;">9/12/2019 11:14 PM</span>
<span class="t" style="left:559.5px;top:222.92px;font-size:7.30px;line-height:7.30px;color:#6d6d6d;letter-spacing:0.040px;-webkit-text-stroke:0.12px #6d6d6d;">File folder</span>
<svg style="left:322px;top:234.52px;" width="8" height="9.5" viewBox="0 0 8 9"><path d="M0.300 1.300l3.500-1v8.600l-3.500-.700z" fill="#f3d56a"/><path d="M0.300 1.300l1.600-.450v8.250l-1.600-.300z" fill="#f9e9a0"/><path d="M4.200 0.300l3.300.700v7.300l-3.300.600z" fill="#f1cd58"/><path d="M4.200 0.300l1.500.300v8.050l-1.500.250z" fill="#f7e08a"/><path d="M3.800 0.300h.5v8.600h-.5z" fill="#c79a22"/></svg>
<span class="t" style="left:334px;top:236.00px;font-size:7.30px;line-height:7.30px;color:#222;letter-spacing:0.058px;-webkit-text-stroke:0.12px #222;">profiles</span>
<span class="t" style="left:484.5px;top:236.00px;font-size:7.30px;line-height:7.30px;color:#6d6d6d;letter-spacing:-0.068px;-webkit-text-stroke:0.12px #6d6d6d;">9/12/2019 11:14 PM</span>
<span class="t" style="left:559.5px;top:236.00px;font-size:7.30px;line-height:7.30px;color:#6d6d6d;letter-spacing:0.040px;-webkit-text-stroke:0.12px #6d6d6d;">File folder</span>
<svg style="left:322px;top:247.6px;" width="8" height="9.5" viewBox="0 0 8 9"><path d="M0.300 1.300l3.500-1v8.600l-3.500-.700z" fill="#f3d56a"/><path d="M0.300 1.300l1.600-.450v8.250l-1.600-.300z" fill="#f9e9a0"/><path d="M4.200 0.300l3.300.700v7.300l-3.300.600z" fill="#f1cd58"/><path d="M4.200 0.300l1.500.300v8.050l-1.500.250z" fill="#f7e08a"/><path d="M3.800 0.300h.5v8.600h-.5z" fill="#c79a22"/></svg>
<span class="t" style="left:334px;top:249.08px;font-size:7.30px;line-height:7.30px;color:#222;letter-spacing:0.038px;-webkit-text-stroke:0.12px #222;">templates</span>
<span class="t" style="left:484.5px;top:249.08px;font-size:7.30px;line-height:7.30px;color:#6d6d6d;letter-spacing:-0.068px;-webkit-text-stroke:0.12px #6d6d6d;">9/12/2019 11:14 PM</span>
<span class="t" style="left:559.5px;top:249.08px;font-size:7.30px;line-height:7.30px;color:#6d6d6d;letter-spacing:0.040px;-webkit-text-stroke:0.12px #6d6d6d;">File folder</span>
<svg style="left:322px;top:260.68px;" width="8" height="9.5" viewBox="0 0 8 9"><path d="M0.300 1.300l3.500-1v8.600l-3.500-.700z" fill="#f3d56a"/><path d="M0.300 1.300l1.600-.450v8.250l-1.600-.300z" fill="#f9e9a0"/><path d="M4.200 0.300l3.300.700v7.300l-3.300.600z" fill="#f1cd58"/><path d="M4.200 0.300l1.500.300v8.050l-1.500.250z" fill="#f7e08a"/><path d="M3.800 0.300h.5v8.600h-.5z" fill="#c79a22"/></svg>
<span class="t" style="left:334px;top:262.16px;font-size:7.30px;line-height:7.30px;color:#222;letter-spacing:-0.043px;-webkit-text-stroke:0.12px #222;">tester</span>
<span class="t" style="left:484.5px;top:262.16px;font-size:7.30px;line-height:7.30px;color:#6d6d6d;letter-spacing:-0.068px;-webkit-text-stroke:0.12px #6d6d6d;">9/12/2019 11:14 PM</span>
<span class="t" style="left:559.5px;top:262.16px;font-size:7.30px;line-height:7.30px;color:#6d6d6d;letter-spacing:0.040px;-webkit-text-stroke:0.12px #6d6d6d;">File folder</span>
<svg style="left:322.5px;top:273.56px;" width="7" height="9" viewBox="0 0 7 9"><path d="M0.500 0.500h4.300l1.700 1.700v6.300h-6z" fill="#fff" stroke="#9a9a9a" stroke-width="0.600"/><path d="M1.500 3.500h3.500M1.500 5h3.500M1.500 6.500h3.500" stroke="#c4c4c4" stroke-width="0.500"/></svg>
<span class="t" style="left:334px;top:275.24px;font-size:7.30px;line-height:7.30px;color:#222;letter-spacing:0.190px;-webkit-text-stroke:0.12px #222;">origin</span>
<span class="t" style="left:484.5px;top:275.24px;font-size:7.30px;line-height:7.30px;color:#6d6d6d;letter-spacing:-0.068px;-webkit-text-stroke:0.12px #6d6d6d;">9/12/2019 11:14 PM</span>
<span class="t" style="left:559.5px;top:275.24px;font-size:7.30px;line-height:7.30px;color:#6d6d6d;letter-spacing:0.177px;-webkit-text-stroke:0.12px #6d6d6d;">Text Document</span>
<span class="t" style="left:660.5px;top:275.24px;font-size:7.30px;line-height:7.30px;color:#6d6d6d;letter-spacing:-0.333px;-webkit-text-stroke:0.12px #6d6d6d;">1 KB</span>
<span class="t" style="left:219.5px;top:404.59px;font-size:7.29px;line-height:7.29px;color:#4a4a4a;">8 items</span>
<span class="t" style="left:256px;top:404.59px;font-size:7.29px;line-height:7.29px;color:#4a4a4a;">1 item selected</span>
<div style="left:671px;top:402px;width:13.5px;height:13px;background:#d5e8f8;border:1px solid #6ab0e8;"></div>
<svg style="left:673.5px;top:404.5px;" width="9" height="8" viewBox="0 0 9 8"><path d="M0.500 1h2M0.500 3.500h2M0.500 6h2" stroke="#5a8ad0" stroke-width="1"/><path d="M3.500 1h4.500M3.500 3.500h4.500M3.500 6h4.500" stroke="#7a8aa0" stroke-width="0.800" stroke-dasharray="1.200 0.600"/></svg>
<svg style="left:687.5px;top:404.5px;" width="8" height="8" viewBox="0 0 8 8"><rect x="0.500" y="0.500" width="7" height="6.500" fill="#eef3f8" stroke="#8a9ab0" stroke-width="0.700"/><rect x="1.500" y="3" width="5" height="3" fill="#5a7a9a"/></svg>
<svg style="left:346.5px;top:224.5px;" width="9" height="15" viewBox="0 0 9 15"><path d="M0.600 0.600v11.500l2.600-2.500 1.800 4.300 1.700-.7-1.800-4.200h3.600z" fill="#fff" stroke="#111" stroke-width="0.800"/></svg>
</div></body></html>
